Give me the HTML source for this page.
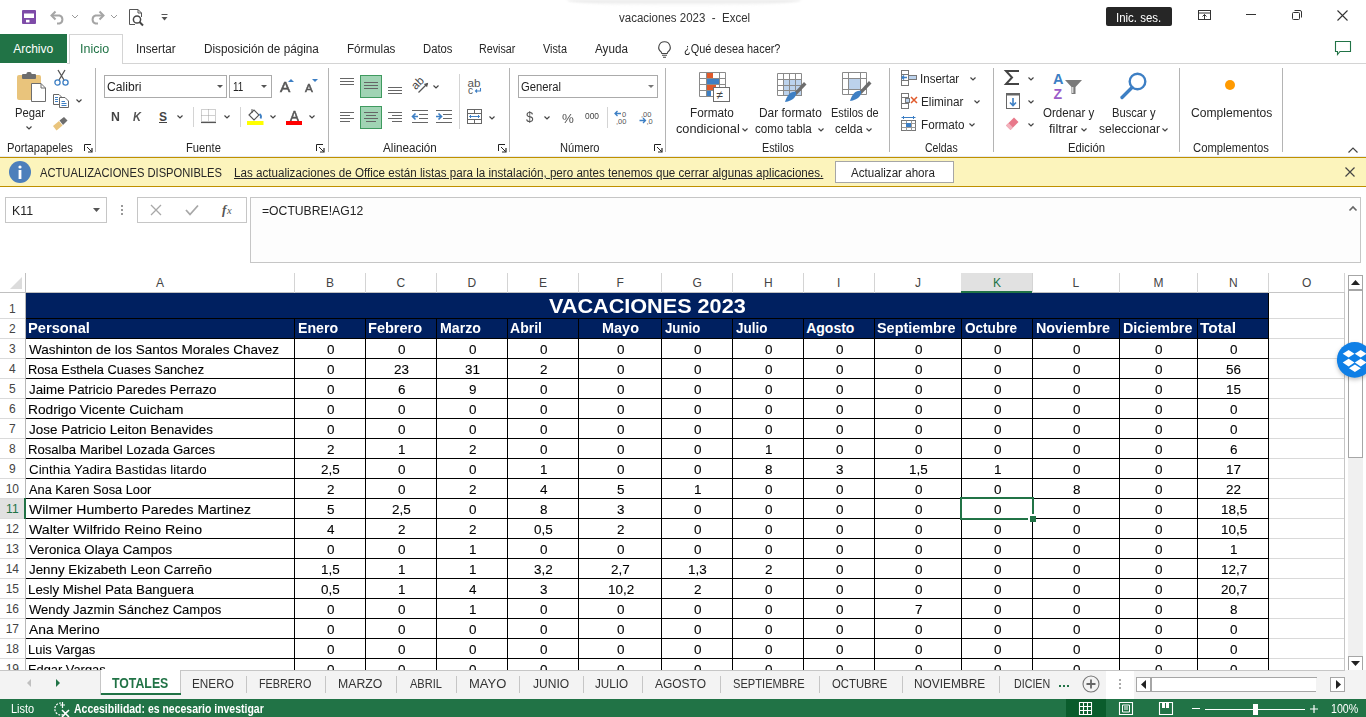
<!DOCTYPE html>
<html><head><meta charset="utf-8"><title>vacaciones 2023 - Excel</title>
<style>
html,body{margin:0;padding:0;}
body{width:1366px;height:717px;overflow:hidden;position:relative;background:#fff;font-family:"Liberation Sans", sans-serif;}
.a{position:absolute;}
.t{position:absolute;white-space:pre;transform-origin:0 0;}
svg.a{overflow:visible;}
</style></head><body>
<div class="a" style="left:0px;top:273px;width:1344px;height:20px;background:#fff;"></div>
<div class="a" style="left:0px;top:292px;width:1344px;height:1px;background:#c0c0c0;"></div>
<div class="a" style="left:294px;top:273px;width:1px;height:20px;background:#d4d4d4;"></div>
<span class="t" style="left:156.00px;top:277px;font-size:12px;line-height:12px;color:#444;">A</span>
<div class="a" style="left:365px;top:273px;width:1px;height:20px;background:#d4d4d4;"></div>
<span class="t" style="left:326.00px;top:277px;font-size:12px;line-height:12px;color:#444;">B</span>
<div class="a" style="left:436px;top:273px;width:1px;height:20px;background:#d4d4d4;"></div>
<span class="t" style="left:396.50px;top:277px;font-size:12px;line-height:12px;color:#444;">C</span>
<div class="a" style="left:507px;top:273px;width:1px;height:20px;background:#d4d4d4;"></div>
<span class="t" style="left:467.50px;top:277px;font-size:12px;line-height:12px;color:#444;">D</span>
<div class="a" style="left:578px;top:273px;width:1px;height:20px;background:#d4d4d4;"></div>
<span class="t" style="left:539.00px;top:277px;font-size:12px;line-height:12px;color:#444;">E</span>
<div class="a" style="left:661px;top:273px;width:1px;height:20px;background:#d4d4d4;"></div>
<span class="t" style="left:616.50px;top:277px;font-size:12px;line-height:12px;color:#444;">F</span>
<div class="a" style="left:732px;top:273px;width:1px;height:20px;background:#d4d4d4;"></div>
<span class="t" style="left:692.50px;top:277px;font-size:12px;line-height:12px;color:#444;">G</span>
<div class="a" style="left:803px;top:273px;width:1px;height:20px;background:#d4d4d4;"></div>
<span class="t" style="left:764.00px;top:277px;font-size:12px;line-height:12px;color:#444;">H</span>
<div class="a" style="left:874px;top:273px;width:1px;height:20px;background:#d4d4d4;"></div>
<span class="t" style="left:837.00px;top:277px;font-size:12px;line-height:12px;color:#444;">I</span>
<div class="a" style="left:961px;top:273px;width:1px;height:20px;background:#d4d4d4;"></div>
<span class="t" style="left:915.00px;top:277px;font-size:12px;line-height:12px;color:#444;">J</span>
<div class="a" style="left:961px;top:273px;width:72px;height:20px;background:#e1e1e1;"></div>
<div class="a" style="left:961px;top:291px;width:72px;height:2px;background:#217346;"></div>
<div class="a" style="left:1032px;top:273px;width:1px;height:20px;background:#d4d4d4;"></div>
<span class="t" style="left:993.00px;top:277px;font-size:12px;line-height:12px;color:#217346;">K</span>
<div class="a" style="left:1119px;top:273px;width:1px;height:20px;background:#d4d4d4;"></div>
<span class="t" style="left:1072.50px;top:277px;font-size:12px;line-height:12px;color:#444;">L</span>
<div class="a" style="left:1197px;top:273px;width:1px;height:20px;background:#d4d4d4;"></div>
<span class="t" style="left:1153.50px;top:277px;font-size:12px;line-height:12px;color:#444;">M</span>
<div class="a" style="left:1268px;top:273px;width:1px;height:20px;background:#d4d4d4;"></div>
<span class="t" style="left:1229.00px;top:277px;font-size:12px;line-height:12px;color:#444;">N</span>
<div class="a" style="left:1344px;top:273px;width:1px;height:20px;background:#d4d4d4;"></div>
<span class="t" style="left:1302.00px;top:277px;font-size:12px;line-height:12px;color:#444;">O</span>
<svg class="a" style="left:10px;top:277px;" width="12" height="12" viewBox="0 0 12 12"><path d="M12 0 L12 12 L0 12 Z" fill="#dcdcdc"/></svg>
<div class="a" style="left:25px;top:273px;width:1px;height:20px;background:#c0c0c0;"></div>
<div class="a" style="left:0px;top:318px;width:25px;height:1px;background:#dadada;"></div>
<span class="t" style="left:9.00px;top:303px;font-size:12px;line-height:12px;color:#444;">1</span>
<div class="a" style="left:0px;top:338px;width:25px;height:1px;background:#dadada;"></div>
<span class="t" style="left:9.00px;top:323px;font-size:12px;line-height:12px;color:#444;">2</span>
<div class="a" style="left:0px;top:358px;width:25px;height:1px;background:#dadada;"></div>
<span class="t" style="left:9.00px;top:343px;font-size:12px;line-height:12px;color:#444;">3</span>
<div class="a" style="left:0px;top:378px;width:25px;height:1px;background:#dadada;"></div>
<span class="t" style="left:9.00px;top:363px;font-size:12px;line-height:12px;color:#444;">4</span>
<div class="a" style="left:0px;top:398px;width:25px;height:1px;background:#dadada;"></div>
<span class="t" style="left:9.00px;top:383px;font-size:12px;line-height:12px;color:#444;">5</span>
<div class="a" style="left:0px;top:418px;width:25px;height:1px;background:#dadada;"></div>
<span class="t" style="left:9.00px;top:403px;font-size:12px;line-height:12px;color:#444;">6</span>
<div class="a" style="left:0px;top:438px;width:25px;height:1px;background:#dadada;"></div>
<span class="t" style="left:9.00px;top:423px;font-size:12px;line-height:12px;color:#444;">7</span>
<div class="a" style="left:0px;top:458px;width:25px;height:1px;background:#dadada;"></div>
<span class="t" style="left:9.00px;top:443px;font-size:12px;line-height:12px;color:#444;">8</span>
<div class="a" style="left:0px;top:478px;width:25px;height:1px;background:#dadada;"></div>
<span class="t" style="left:9.00px;top:463px;font-size:12px;line-height:12px;color:#444;">9</span>
<div class="a" style="left:0px;top:498px;width:25px;height:1px;background:#dadada;"></div>
<span class="t" style="left:5.66px;top:483px;font-size:12px;line-height:12px;color:#444;">10</span>
<div class="a" style="left:0px;top:499px;width:25px;height:20px;background:#e1e1e1;"></div>
<div class="a" style="left:0px;top:518px;width:25px;height:1px;background:#dadada;"></div>
<span class="t" style="left:6.11px;top:503px;font-size:12px;line-height:12px;color:#217346;">11</span>
<div class="a" style="left:0px;top:538px;width:25px;height:1px;background:#dadada;"></div>
<span class="t" style="left:5.66px;top:523px;font-size:12px;line-height:12px;color:#444;">12</span>
<div class="a" style="left:0px;top:558px;width:25px;height:1px;background:#dadada;"></div>
<span class="t" style="left:5.66px;top:543px;font-size:12px;line-height:12px;color:#444;">13</span>
<div class="a" style="left:0px;top:578px;width:25px;height:1px;background:#dadada;"></div>
<span class="t" style="left:5.66px;top:563px;font-size:12px;line-height:12px;color:#444;">14</span>
<div class="a" style="left:0px;top:598px;width:25px;height:1px;background:#dadada;"></div>
<span class="t" style="left:5.66px;top:583px;font-size:12px;line-height:12px;color:#444;">15</span>
<div class="a" style="left:0px;top:618px;width:25px;height:1px;background:#dadada;"></div>
<span class="t" style="left:5.66px;top:603px;font-size:12px;line-height:12px;color:#444;">16</span>
<div class="a" style="left:0px;top:638px;width:25px;height:1px;background:#dadada;"></div>
<span class="t" style="left:5.66px;top:623px;font-size:12px;line-height:12px;color:#444;">17</span>
<div class="a" style="left:0px;top:658px;width:25px;height:1px;background:#dadada;"></div>
<span class="t" style="left:5.66px;top:643px;font-size:12px;line-height:12px;color:#444;">18</span>
<div class="a" style="left:0px;top:678px;width:25px;height:1px;background:#dadada;"></div>
<span class="t" style="left:5.66px;top:663px;font-size:12px;line-height:12px;color:#444;">19</span>
<div class="a" style="left:25px;top:293px;width:1px;height:377px;background:#b8b8b8;"></div>
<div class="a" style="left:26px;top:293px;width:1242px;height:45px;background:#002060;"></div>
<div class="a" style="left:26px;top:318px;width:1242px;height:1px;background:#000;"></div>
<div class="a" style="left:1269px;top:318px;width:75px;height:1px;background:#d9d9d9;"></div>
<div class="a" style="left:1269px;top:338px;width:75px;height:1px;background:#d9d9d9;"></div>
<div class="a" style="left:1269px;top:358px;width:75px;height:1px;background:#d9d9d9;"></div>
<div class="a" style="left:1269px;top:378px;width:75px;height:1px;background:#d9d9d9;"></div>
<div class="a" style="left:1269px;top:398px;width:75px;height:1px;background:#d9d9d9;"></div>
<div class="a" style="left:1269px;top:418px;width:75px;height:1px;background:#d9d9d9;"></div>
<div class="a" style="left:1269px;top:438px;width:75px;height:1px;background:#d9d9d9;"></div>
<div class="a" style="left:1269px;top:458px;width:75px;height:1px;background:#d9d9d9;"></div>
<div class="a" style="left:1269px;top:478px;width:75px;height:1px;background:#d9d9d9;"></div>
<div class="a" style="left:1269px;top:498px;width:75px;height:1px;background:#d9d9d9;"></div>
<div class="a" style="left:1269px;top:518px;width:75px;height:1px;background:#d9d9d9;"></div>
<div class="a" style="left:1269px;top:538px;width:75px;height:1px;background:#d9d9d9;"></div>
<div class="a" style="left:1269px;top:558px;width:75px;height:1px;background:#d9d9d9;"></div>
<div class="a" style="left:1269px;top:578px;width:75px;height:1px;background:#d9d9d9;"></div>
<div class="a" style="left:1269px;top:598px;width:75px;height:1px;background:#d9d9d9;"></div>
<div class="a" style="left:1269px;top:618px;width:75px;height:1px;background:#d9d9d9;"></div>
<div class="a" style="left:1269px;top:638px;width:75px;height:1px;background:#d9d9d9;"></div>
<div class="a" style="left:1269px;top:658px;width:75px;height:1px;background:#d9d9d9;"></div>
<div class="a" style="left:1269px;top:678px;width:75px;height:1px;background:#d9d9d9;"></div>
<div class="a" style="left:1344px;top:293px;width:1px;height:377px;background:#c6c6c6;"></div>
<div class="a" style="left:1269px;top:292px;width:76px;height:1px;background:#c6c6c6;"></div>
<div class="a" style="left:26px;top:338px;width:1243px;height:1px;background:#000;"></div>
<div class="a" style="left:26px;top:358px;width:1243px;height:1px;background:#000;"></div>
<div class="a" style="left:26px;top:378px;width:1243px;height:1px;background:#000;"></div>
<div class="a" style="left:26px;top:398px;width:1243px;height:1px;background:#000;"></div>
<div class="a" style="left:26px;top:418px;width:1243px;height:1px;background:#000;"></div>
<div class="a" style="left:26px;top:438px;width:1243px;height:1px;background:#000;"></div>
<div class="a" style="left:26px;top:458px;width:1243px;height:1px;background:#000;"></div>
<div class="a" style="left:26px;top:478px;width:1243px;height:1px;background:#000;"></div>
<div class="a" style="left:26px;top:498px;width:1243px;height:1px;background:#000;"></div>
<div class="a" style="left:26px;top:518px;width:1243px;height:1px;background:#000;"></div>
<div class="a" style="left:26px;top:538px;width:1243px;height:1px;background:#000;"></div>
<div class="a" style="left:26px;top:558px;width:1243px;height:1px;background:#000;"></div>
<div class="a" style="left:26px;top:578px;width:1243px;height:1px;background:#000;"></div>
<div class="a" style="left:26px;top:598px;width:1243px;height:1px;background:#000;"></div>
<div class="a" style="left:26px;top:618px;width:1243px;height:1px;background:#000;"></div>
<div class="a" style="left:26px;top:638px;width:1243px;height:1px;background:#000;"></div>
<div class="a" style="left:26px;top:658px;width:1243px;height:1px;background:#000;"></div>
<div class="a" style="left:26px;top:678px;width:1243px;height:1px;background:#000;"></div>
<div class="a" style="left:294px;top:318px;width:1px;height:352px;background:#000;"></div>
<div class="a" style="left:365px;top:318px;width:1px;height:352px;background:#000;"></div>
<div class="a" style="left:436px;top:318px;width:1px;height:352px;background:#000;"></div>
<div class="a" style="left:507px;top:318px;width:1px;height:352px;background:#000;"></div>
<div class="a" style="left:578px;top:318px;width:1px;height:352px;background:#000;"></div>
<div class="a" style="left:661px;top:318px;width:1px;height:352px;background:#000;"></div>
<div class="a" style="left:732px;top:318px;width:1px;height:352px;background:#000;"></div>
<div class="a" style="left:803px;top:318px;width:1px;height:352px;background:#000;"></div>
<div class="a" style="left:874px;top:318px;width:1px;height:352px;background:#000;"></div>
<div class="a" style="left:961px;top:318px;width:1px;height:352px;background:#000;"></div>
<div class="a" style="left:1032px;top:318px;width:1px;height:352px;background:#000;"></div>
<div class="a" style="left:1119px;top:318px;width:1px;height:352px;background:#000;"></div>
<div class="a" style="left:1197px;top:318px;width:1px;height:352px;background:#000;"></div>
<div class="a" style="left:1268px;top:318px;width:1px;height:352px;background:#000;"></div>
<div class="a" style="left:1268px;top:293px;width:1px;height:377px;background:#000;"></div>
<span class="t" style="left:549.00px;top:295px;font-size:21px;line-height:21px;color:#fff;font-weight:bold;transform:scaleX(1.0298);">VACACIONES 2023</span>
<span class="t" style="left:28.40px;top:321px;font-size:14px;line-height:14px;color:#fff;font-weight:bold;transform:scaleX(1.0472);">Personal</span>
<span class="t" style="left:297.60px;top:321px;font-size:14px;line-height:14px;color:#fff;font-weight:bold;transform:scaleX(1.0096);">Enero</span>
<span class="t" style="left:368.40px;top:321px;font-size:14px;line-height:14px;color:#fff;font-weight:bold;transform:scaleX(1.0393);">Febrero</span>
<span class="t" style="left:439.60px;top:321px;font-size:14px;line-height:14px;color:#fff;font-weight:bold;transform:scaleX(1.0126);">Marzo</span>
<span class="t" style="left:510.20px;top:321px;font-size:14px;line-height:14px;color:#fff;font-weight:bold;transform:scaleX(1.0032);">Abril</span>
<span class="t" style="left:601.60px;top:321px;font-size:14px;line-height:14px;color:#fff;font-weight:bold;transform:scaleX(1.0331);">Mayo</span>
<span class="t" style="left:665.20px;top:321px;font-size:14px;line-height:14px;color:#fff;font-weight:bold;transform:scaleX(0.9462);">Junio</span>
<span class="t" style="left:735.90px;top:321px;font-size:14px;line-height:14px;color:#fff;font-weight:bold;transform:scaleX(0.9621);">Julio</span>
<span class="t" style="left:806.20px;top:321px;font-size:14px;line-height:14px;color:#fff;font-weight:bold;">Agosto</span>
<span class="t" style="left:877.40px;top:321px;font-size:14px;line-height:14px;color:#fff;font-weight:bold;transform:scaleX(1.0293);">Septiembre</span>
<span class="t" style="left:964.80px;top:321px;font-size:14px;line-height:14px;color:#fff;font-weight:bold;transform:scaleX(0.9686);">Octubre</span>
<span class="t" style="left:1035.70px;top:321px;font-size:14px;line-height:14px;color:#fff;font-weight:bold;transform:scaleX(1.0224);">Noviembre</span>
<span class="t" style="left:1122.60px;top:321px;font-size:14px;line-height:14px;color:#fff;font-weight:bold;transform:scaleX(1.0249);">Diciembre</span>
<span class="t" style="left:1200.30px;top:321px;font-size:14px;line-height:14px;color:#fff;font-weight:bold;transform:scaleX(1.1107);">Total</span>
<span class="t" style="left:28.80px;top:343px;font-size:13px;line-height:13px;color:#000;transform:scaleX(1.0376);-webkit-text-stroke:0.1px #000;">Washinton de los Santos Morales Chavez</span>
<span class="t" style="left:326.97px;top:343px;font-size:13px;line-height:13px;color:#000;transform:scaleX(1.0360);-webkit-text-stroke:0.1px #000;">0</span>
<span class="t" style="left:397.97px;top:343px;font-size:13px;line-height:13px;color:#000;transform:scaleX(1.0360);-webkit-text-stroke:0.1px #000;">0</span>
<span class="t" style="left:468.97px;top:343px;font-size:13px;line-height:13px;color:#000;transform:scaleX(1.0360);-webkit-text-stroke:0.1px #000;">0</span>
<span class="t" style="left:539.97px;top:343px;font-size:13px;line-height:13px;color:#000;transform:scaleX(1.0360);-webkit-text-stroke:0.1px #000;">0</span>
<span class="t" style="left:616.97px;top:343px;font-size:13px;line-height:13px;color:#000;transform:scaleX(1.0360);-webkit-text-stroke:0.1px #000;">0</span>
<span class="t" style="left:693.97px;top:343px;font-size:13px;line-height:13px;color:#000;transform:scaleX(1.0360);-webkit-text-stroke:0.1px #000;">0</span>
<span class="t" style="left:764.97px;top:343px;font-size:13px;line-height:13px;color:#000;transform:scaleX(1.0360);-webkit-text-stroke:0.1px #000;">0</span>
<span class="t" style="left:835.97px;top:343px;font-size:13px;line-height:13px;color:#000;transform:scaleX(1.0360);-webkit-text-stroke:0.1px #000;">0</span>
<span class="t" style="left:914.97px;top:343px;font-size:13px;line-height:13px;color:#000;transform:scaleX(1.0360);-webkit-text-stroke:0.1px #000;">0</span>
<span class="t" style="left:993.97px;top:343px;font-size:13px;line-height:13px;color:#000;transform:scaleX(1.0360);-webkit-text-stroke:0.1px #000;">0</span>
<span class="t" style="left:1072.97px;top:343px;font-size:13px;line-height:13px;color:#000;transform:scaleX(1.0360);-webkit-text-stroke:0.1px #000;">0</span>
<span class="t" style="left:1155.47px;top:343px;font-size:13px;line-height:13px;color:#000;transform:scaleX(1.0360);-webkit-text-stroke:0.1px #000;">0</span>
<span class="t" style="left:1229.97px;top:343px;font-size:13px;line-height:13px;color:#000;transform:scaleX(1.0360);-webkit-text-stroke:0.1px #000;">0</span>
<span class="t" style="left:27.82px;top:363px;font-size:13px;line-height:13px;color:#000;transform:scaleX(0.9825);-webkit-text-stroke:0.1px #000;">Rosa Esthela Cuases Sanchez</span>
<span class="t" style="left:326.97px;top:363px;font-size:13px;line-height:13px;color:#000;transform:scaleX(1.0360);-webkit-text-stroke:0.1px #000;">0</span>
<span class="t" style="left:394.23px;top:363px;font-size:13px;line-height:13px;color:#000;transform:scaleX(1.0360);-webkit-text-stroke:0.1px #000;">23</span>
<span class="t" style="left:465.23px;top:363px;font-size:13px;line-height:13px;color:#000;transform:scaleX(1.0360);-webkit-text-stroke:0.1px #000;">31</span>
<span class="t" style="left:539.97px;top:363px;font-size:13px;line-height:13px;color:#000;transform:scaleX(1.0360);-webkit-text-stroke:0.1px #000;">2</span>
<span class="t" style="left:616.97px;top:363px;font-size:13px;line-height:13px;color:#000;transform:scaleX(1.0360);-webkit-text-stroke:0.1px #000;">0</span>
<span class="t" style="left:693.97px;top:363px;font-size:13px;line-height:13px;color:#000;transform:scaleX(1.0360);-webkit-text-stroke:0.1px #000;">0</span>
<span class="t" style="left:764.97px;top:363px;font-size:13px;line-height:13px;color:#000;transform:scaleX(1.0360);-webkit-text-stroke:0.1px #000;">0</span>
<span class="t" style="left:835.97px;top:363px;font-size:13px;line-height:13px;color:#000;transform:scaleX(1.0360);-webkit-text-stroke:0.1px #000;">0</span>
<span class="t" style="left:914.97px;top:363px;font-size:13px;line-height:13px;color:#000;transform:scaleX(1.0360);-webkit-text-stroke:0.1px #000;">0</span>
<span class="t" style="left:993.97px;top:363px;font-size:13px;line-height:13px;color:#000;transform:scaleX(1.0360);-webkit-text-stroke:0.1px #000;">0</span>
<span class="t" style="left:1072.97px;top:363px;font-size:13px;line-height:13px;color:#000;transform:scaleX(1.0360);-webkit-text-stroke:0.1px #000;">0</span>
<span class="t" style="left:1155.47px;top:363px;font-size:13px;line-height:13px;color:#000;transform:scaleX(1.0360);-webkit-text-stroke:0.1px #000;">0</span>
<span class="t" style="left:1226.23px;top:363px;font-size:13px;line-height:13px;color:#000;transform:scaleX(1.0360);-webkit-text-stroke:0.1px #000;">56</span>
<span class="t" style="left:28.80px;top:383px;font-size:13px;line-height:13px;color:#000;transform:scaleX(1.0259);-webkit-text-stroke:0.1px #000;">Jaime Patricio Paredes Perrazo</span>
<span class="t" style="left:326.97px;top:383px;font-size:13px;line-height:13px;color:#000;transform:scaleX(1.0360);-webkit-text-stroke:0.1px #000;">0</span>
<span class="t" style="left:397.97px;top:383px;font-size:13px;line-height:13px;color:#000;transform:scaleX(1.0360);-webkit-text-stroke:0.1px #000;">6</span>
<span class="t" style="left:468.97px;top:383px;font-size:13px;line-height:13px;color:#000;transform:scaleX(1.0360);-webkit-text-stroke:0.1px #000;">9</span>
<span class="t" style="left:539.97px;top:383px;font-size:13px;line-height:13px;color:#000;transform:scaleX(1.0360);-webkit-text-stroke:0.1px #000;">0</span>
<span class="t" style="left:616.97px;top:383px;font-size:13px;line-height:13px;color:#000;transform:scaleX(1.0360);-webkit-text-stroke:0.1px #000;">0</span>
<span class="t" style="left:693.97px;top:383px;font-size:13px;line-height:13px;color:#000;transform:scaleX(1.0360);-webkit-text-stroke:0.1px #000;">0</span>
<span class="t" style="left:764.97px;top:383px;font-size:13px;line-height:13px;color:#000;transform:scaleX(1.0360);-webkit-text-stroke:0.1px #000;">0</span>
<span class="t" style="left:835.97px;top:383px;font-size:13px;line-height:13px;color:#000;transform:scaleX(1.0360);-webkit-text-stroke:0.1px #000;">0</span>
<span class="t" style="left:914.97px;top:383px;font-size:13px;line-height:13px;color:#000;transform:scaleX(1.0360);-webkit-text-stroke:0.1px #000;">0</span>
<span class="t" style="left:993.97px;top:383px;font-size:13px;line-height:13px;color:#000;transform:scaleX(1.0360);-webkit-text-stroke:0.1px #000;">0</span>
<span class="t" style="left:1072.97px;top:383px;font-size:13px;line-height:13px;color:#000;transform:scaleX(1.0360);-webkit-text-stroke:0.1px #000;">0</span>
<span class="t" style="left:1155.47px;top:383px;font-size:13px;line-height:13px;color:#000;transform:scaleX(1.0360);-webkit-text-stroke:0.1px #000;">0</span>
<span class="t" style="left:1226.23px;top:383px;font-size:13px;line-height:13px;color:#000;transform:scaleX(1.0360);-webkit-text-stroke:0.1px #000;">15</span>
<span class="t" style="left:27.74px;top:403px;font-size:13px;line-height:13px;color:#000;transform:scaleX(1.0554);-webkit-text-stroke:0.1px #000;">Rodrigo Vicente Cuicham</span>
<span class="t" style="left:326.97px;top:403px;font-size:13px;line-height:13px;color:#000;transform:scaleX(1.0360);-webkit-text-stroke:0.1px #000;">0</span>
<span class="t" style="left:397.97px;top:403px;font-size:13px;line-height:13px;color:#000;transform:scaleX(1.0360);-webkit-text-stroke:0.1px #000;">0</span>
<span class="t" style="left:468.97px;top:403px;font-size:13px;line-height:13px;color:#000;transform:scaleX(1.0360);-webkit-text-stroke:0.1px #000;">0</span>
<span class="t" style="left:539.97px;top:403px;font-size:13px;line-height:13px;color:#000;transform:scaleX(1.0360);-webkit-text-stroke:0.1px #000;">0</span>
<span class="t" style="left:616.97px;top:403px;font-size:13px;line-height:13px;color:#000;transform:scaleX(1.0360);-webkit-text-stroke:0.1px #000;">0</span>
<span class="t" style="left:693.97px;top:403px;font-size:13px;line-height:13px;color:#000;transform:scaleX(1.0360);-webkit-text-stroke:0.1px #000;">0</span>
<span class="t" style="left:764.97px;top:403px;font-size:13px;line-height:13px;color:#000;transform:scaleX(1.0360);-webkit-text-stroke:0.1px #000;">0</span>
<span class="t" style="left:835.97px;top:403px;font-size:13px;line-height:13px;color:#000;transform:scaleX(1.0360);-webkit-text-stroke:0.1px #000;">0</span>
<span class="t" style="left:914.97px;top:403px;font-size:13px;line-height:13px;color:#000;transform:scaleX(1.0360);-webkit-text-stroke:0.1px #000;">0</span>
<span class="t" style="left:993.97px;top:403px;font-size:13px;line-height:13px;color:#000;transform:scaleX(1.0360);-webkit-text-stroke:0.1px #000;">0</span>
<span class="t" style="left:1072.97px;top:403px;font-size:13px;line-height:13px;color:#000;transform:scaleX(1.0360);-webkit-text-stroke:0.1px #000;">0</span>
<span class="t" style="left:1155.47px;top:403px;font-size:13px;line-height:13px;color:#000;transform:scaleX(1.0360);-webkit-text-stroke:0.1px #000;">0</span>
<span class="t" style="left:1229.97px;top:403px;font-size:13px;line-height:13px;color:#000;transform:scaleX(1.0360);-webkit-text-stroke:0.1px #000;">0</span>
<span class="t" style="left:28.80px;top:423px;font-size:13px;line-height:13px;color:#000;transform:scaleX(1.0355);-webkit-text-stroke:0.1px #000;">Jose Patricio Leiton Benavides</span>
<span class="t" style="left:326.97px;top:423px;font-size:13px;line-height:13px;color:#000;transform:scaleX(1.0360);-webkit-text-stroke:0.1px #000;">0</span>
<span class="t" style="left:397.97px;top:423px;font-size:13px;line-height:13px;color:#000;transform:scaleX(1.0360);-webkit-text-stroke:0.1px #000;">0</span>
<span class="t" style="left:468.97px;top:423px;font-size:13px;line-height:13px;color:#000;transform:scaleX(1.0360);-webkit-text-stroke:0.1px #000;">0</span>
<span class="t" style="left:539.97px;top:423px;font-size:13px;line-height:13px;color:#000;transform:scaleX(1.0360);-webkit-text-stroke:0.1px #000;">0</span>
<span class="t" style="left:616.97px;top:423px;font-size:13px;line-height:13px;color:#000;transform:scaleX(1.0360);-webkit-text-stroke:0.1px #000;">0</span>
<span class="t" style="left:693.97px;top:423px;font-size:13px;line-height:13px;color:#000;transform:scaleX(1.0360);-webkit-text-stroke:0.1px #000;">0</span>
<span class="t" style="left:764.97px;top:423px;font-size:13px;line-height:13px;color:#000;transform:scaleX(1.0360);-webkit-text-stroke:0.1px #000;">0</span>
<span class="t" style="left:835.97px;top:423px;font-size:13px;line-height:13px;color:#000;transform:scaleX(1.0360);-webkit-text-stroke:0.1px #000;">0</span>
<span class="t" style="left:914.97px;top:423px;font-size:13px;line-height:13px;color:#000;transform:scaleX(1.0360);-webkit-text-stroke:0.1px #000;">0</span>
<span class="t" style="left:993.97px;top:423px;font-size:13px;line-height:13px;color:#000;transform:scaleX(1.0360);-webkit-text-stroke:0.1px #000;">0</span>
<span class="t" style="left:1072.97px;top:423px;font-size:13px;line-height:13px;color:#000;transform:scaleX(1.0360);-webkit-text-stroke:0.1px #000;">0</span>
<span class="t" style="left:1155.47px;top:423px;font-size:13px;line-height:13px;color:#000;transform:scaleX(1.0360);-webkit-text-stroke:0.1px #000;">0</span>
<span class="t" style="left:1229.97px;top:423px;font-size:13px;line-height:13px;color:#000;transform:scaleX(1.0360);-webkit-text-stroke:0.1px #000;">0</span>
<span class="t" style="left:27.79px;top:443px;font-size:13px;line-height:13px;color:#000;transform:scaleX(1.0075);-webkit-text-stroke:0.1px #000;">Rosalba Maribel Lozada Garces</span>
<span class="t" style="left:326.97px;top:443px;font-size:13px;line-height:13px;color:#000;transform:scaleX(1.0360);-webkit-text-stroke:0.1px #000;">2</span>
<span class="t" style="left:397.97px;top:443px;font-size:13px;line-height:13px;color:#000;transform:scaleX(1.0360);-webkit-text-stroke:0.1px #000;">1</span>
<span class="t" style="left:468.97px;top:443px;font-size:13px;line-height:13px;color:#000;transform:scaleX(1.0360);-webkit-text-stroke:0.1px #000;">2</span>
<span class="t" style="left:539.97px;top:443px;font-size:13px;line-height:13px;color:#000;transform:scaleX(1.0360);-webkit-text-stroke:0.1px #000;">0</span>
<span class="t" style="left:616.97px;top:443px;font-size:13px;line-height:13px;color:#000;transform:scaleX(1.0360);-webkit-text-stroke:0.1px #000;">0</span>
<span class="t" style="left:693.97px;top:443px;font-size:13px;line-height:13px;color:#000;transform:scaleX(1.0360);-webkit-text-stroke:0.1px #000;">0</span>
<span class="t" style="left:764.97px;top:443px;font-size:13px;line-height:13px;color:#000;transform:scaleX(1.0360);-webkit-text-stroke:0.1px #000;">1</span>
<span class="t" style="left:835.97px;top:443px;font-size:13px;line-height:13px;color:#000;transform:scaleX(1.0360);-webkit-text-stroke:0.1px #000;">0</span>
<span class="t" style="left:914.97px;top:443px;font-size:13px;line-height:13px;color:#000;transform:scaleX(1.0360);-webkit-text-stroke:0.1px #000;">0</span>
<span class="t" style="left:993.97px;top:443px;font-size:13px;line-height:13px;color:#000;transform:scaleX(1.0360);-webkit-text-stroke:0.1px #000;">0</span>
<span class="t" style="left:1072.97px;top:443px;font-size:13px;line-height:13px;color:#000;transform:scaleX(1.0360);-webkit-text-stroke:0.1px #000;">0</span>
<span class="t" style="left:1155.47px;top:443px;font-size:13px;line-height:13px;color:#000;transform:scaleX(1.0360);-webkit-text-stroke:0.1px #000;">0</span>
<span class="t" style="left:1229.97px;top:443px;font-size:13px;line-height:13px;color:#000;transform:scaleX(1.0360);-webkit-text-stroke:0.1px #000;">6</span>
<span class="t" style="left:28.60px;top:463px;font-size:13px;line-height:13px;color:#000;transform:scaleX(1.0274);">Cinthia Yadira Bastidas litardo</span>
<span class="t" style="left:321.36px;top:463px;font-size:13px;line-height:13px;color:#000;transform:scaleX(1.0360);-webkit-text-stroke:0.1px #000;">2,5</span>
<span class="t" style="left:397.97px;top:463px;font-size:13px;line-height:13px;color:#000;transform:scaleX(1.0360);-webkit-text-stroke:0.1px #000;">0</span>
<span class="t" style="left:468.97px;top:463px;font-size:13px;line-height:13px;color:#000;transform:scaleX(1.0360);-webkit-text-stroke:0.1px #000;">0</span>
<span class="t" style="left:539.97px;top:463px;font-size:13px;line-height:13px;color:#000;transform:scaleX(1.0360);-webkit-text-stroke:0.1px #000;">1</span>
<span class="t" style="left:616.97px;top:463px;font-size:13px;line-height:13px;color:#000;transform:scaleX(1.0360);-webkit-text-stroke:0.1px #000;">0</span>
<span class="t" style="left:693.97px;top:463px;font-size:13px;line-height:13px;color:#000;transform:scaleX(1.0360);-webkit-text-stroke:0.1px #000;">0</span>
<span class="t" style="left:764.97px;top:463px;font-size:13px;line-height:13px;color:#000;transform:scaleX(1.0360);-webkit-text-stroke:0.1px #000;">8</span>
<span class="t" style="left:835.97px;top:463px;font-size:13px;line-height:13px;color:#000;transform:scaleX(1.0360);-webkit-text-stroke:0.1px #000;">3</span>
<span class="t" style="left:909.36px;top:463px;font-size:13px;line-height:13px;color:#000;transform:scaleX(1.0360);-webkit-text-stroke:0.1px #000;">1,5</span>
<span class="t" style="left:993.97px;top:463px;font-size:13px;line-height:13px;color:#000;transform:scaleX(1.0360);-webkit-text-stroke:0.1px #000;">1</span>
<span class="t" style="left:1072.97px;top:463px;font-size:13px;line-height:13px;color:#000;transform:scaleX(1.0360);-webkit-text-stroke:0.1px #000;">0</span>
<span class="t" style="left:1155.47px;top:463px;font-size:13px;line-height:13px;color:#000;transform:scaleX(1.0360);-webkit-text-stroke:0.1px #000;">0</span>
<span class="t" style="left:1226.23px;top:463px;font-size:13px;line-height:13px;color:#000;transform:scaleX(1.0360);-webkit-text-stroke:0.1px #000;">17</span>
<span class="t" style="left:28.80px;top:483px;font-size:13px;line-height:13px;color:#000;transform:scaleX(0.9842);-webkit-text-stroke:0.1px #000;">Ana Karen Sosa Loor</span>
<span class="t" style="left:326.97px;top:483px;font-size:13px;line-height:13px;color:#000;transform:scaleX(1.0360);-webkit-text-stroke:0.1px #000;">2</span>
<span class="t" style="left:397.97px;top:483px;font-size:13px;line-height:13px;color:#000;transform:scaleX(1.0360);-webkit-text-stroke:0.1px #000;">0</span>
<span class="t" style="left:468.97px;top:483px;font-size:13px;line-height:13px;color:#000;transform:scaleX(1.0360);-webkit-text-stroke:0.1px #000;">2</span>
<span class="t" style="left:539.97px;top:483px;font-size:13px;line-height:13px;color:#000;transform:scaleX(1.0360);-webkit-text-stroke:0.1px #000;">4</span>
<span class="t" style="left:616.97px;top:483px;font-size:13px;line-height:13px;color:#000;transform:scaleX(1.0360);-webkit-text-stroke:0.1px #000;">5</span>
<span class="t" style="left:693.97px;top:483px;font-size:13px;line-height:13px;color:#000;transform:scaleX(1.0360);-webkit-text-stroke:0.1px #000;">1</span>
<span class="t" style="left:764.97px;top:483px;font-size:13px;line-height:13px;color:#000;transform:scaleX(1.0360);-webkit-text-stroke:0.1px #000;">0</span>
<span class="t" style="left:835.97px;top:483px;font-size:13px;line-height:13px;color:#000;transform:scaleX(1.0360);-webkit-text-stroke:0.1px #000;">0</span>
<span class="t" style="left:914.97px;top:483px;font-size:13px;line-height:13px;color:#000;transform:scaleX(1.0360);-webkit-text-stroke:0.1px #000;">0</span>
<span class="t" style="left:993.97px;top:483px;font-size:13px;line-height:13px;color:#000;transform:scaleX(1.0360);-webkit-text-stroke:0.1px #000;">0</span>
<span class="t" style="left:1072.97px;top:483px;font-size:13px;line-height:13px;color:#000;transform:scaleX(1.0360);-webkit-text-stroke:0.1px #000;">8</span>
<span class="t" style="left:1155.47px;top:483px;font-size:13px;line-height:13px;color:#000;transform:scaleX(1.0360);-webkit-text-stroke:0.1px #000;">0</span>
<span class="t" style="left:1226.23px;top:483px;font-size:13px;line-height:13px;color:#000;transform:scaleX(1.0360);-webkit-text-stroke:0.1px #000;">22</span>
<span class="t" style="left:28.80px;top:503px;font-size:13px;line-height:13px;color:#000;transform:scaleX(1.0746);-webkit-text-stroke:0.1px #000;">Wilmer Humberto Paredes Martinez</span>
<span class="t" style="left:326.97px;top:503px;font-size:13px;line-height:13px;color:#000;transform:scaleX(1.0360);-webkit-text-stroke:0.1px #000;">5</span>
<span class="t" style="left:392.36px;top:503px;font-size:13px;line-height:13px;color:#000;transform:scaleX(1.0360);-webkit-text-stroke:0.1px #000;">2,5</span>
<span class="t" style="left:468.97px;top:503px;font-size:13px;line-height:13px;color:#000;transform:scaleX(1.0360);-webkit-text-stroke:0.1px #000;">0</span>
<span class="t" style="left:539.97px;top:503px;font-size:13px;line-height:13px;color:#000;transform:scaleX(1.0360);-webkit-text-stroke:0.1px #000;">8</span>
<span class="t" style="left:616.97px;top:503px;font-size:13px;line-height:13px;color:#000;transform:scaleX(1.0360);-webkit-text-stroke:0.1px #000;">3</span>
<span class="t" style="left:693.97px;top:503px;font-size:13px;line-height:13px;color:#000;transform:scaleX(1.0360);-webkit-text-stroke:0.1px #000;">0</span>
<span class="t" style="left:764.97px;top:503px;font-size:13px;line-height:13px;color:#000;transform:scaleX(1.0360);-webkit-text-stroke:0.1px #000;">0</span>
<span class="t" style="left:835.97px;top:503px;font-size:13px;line-height:13px;color:#000;transform:scaleX(1.0360);-webkit-text-stroke:0.1px #000;">0</span>
<span class="t" style="left:914.97px;top:503px;font-size:13px;line-height:13px;color:#000;transform:scaleX(1.0360);-webkit-text-stroke:0.1px #000;">0</span>
<span class="t" style="left:993.97px;top:503px;font-size:13px;line-height:13px;color:#000;transform:scaleX(1.0360);-webkit-text-stroke:0.1px #000;">0</span>
<span class="t" style="left:1072.97px;top:503px;font-size:13px;line-height:13px;color:#000;transform:scaleX(1.0360);-webkit-text-stroke:0.1px #000;">0</span>
<span class="t" style="left:1155.47px;top:503px;font-size:13px;line-height:13px;color:#000;transform:scaleX(1.0360);-webkit-text-stroke:0.1px #000;">0</span>
<span class="t" style="left:1220.61px;top:503px;font-size:13px;line-height:13px;color:#000;transform:scaleX(1.0360);-webkit-text-stroke:0.1px #000;">18,5</span>
<span class="t" style="left:28.80px;top:523px;font-size:13px;line-height:13px;color:#000;transform:scaleX(1.0871);-webkit-text-stroke:0.1px #000;">Walter Wilfrido Reino Reino</span>
<span class="t" style="left:326.97px;top:523px;font-size:13px;line-height:13px;color:#000;transform:scaleX(1.0360);-webkit-text-stroke:0.1px #000;">4</span>
<span class="t" style="left:397.97px;top:523px;font-size:13px;line-height:13px;color:#000;transform:scaleX(1.0360);-webkit-text-stroke:0.1px #000;">2</span>
<span class="t" style="left:468.97px;top:523px;font-size:13px;line-height:13px;color:#000;transform:scaleX(1.0360);-webkit-text-stroke:0.1px #000;">2</span>
<span class="t" style="left:534.36px;top:523px;font-size:13px;line-height:13px;color:#000;transform:scaleX(1.0360);-webkit-text-stroke:0.1px #000;">0,5</span>
<span class="t" style="left:616.97px;top:523px;font-size:13px;line-height:13px;color:#000;transform:scaleX(1.0360);-webkit-text-stroke:0.1px #000;">2</span>
<span class="t" style="left:693.97px;top:523px;font-size:13px;line-height:13px;color:#000;transform:scaleX(1.0360);-webkit-text-stroke:0.1px #000;">0</span>
<span class="t" style="left:764.97px;top:523px;font-size:13px;line-height:13px;color:#000;transform:scaleX(1.0360);-webkit-text-stroke:0.1px #000;">0</span>
<span class="t" style="left:835.97px;top:523px;font-size:13px;line-height:13px;color:#000;transform:scaleX(1.0360);-webkit-text-stroke:0.1px #000;">0</span>
<span class="t" style="left:914.97px;top:523px;font-size:13px;line-height:13px;color:#000;transform:scaleX(1.0360);-webkit-text-stroke:0.1px #000;">0</span>
<span class="t" style="left:993.97px;top:523px;font-size:13px;line-height:13px;color:#000;transform:scaleX(1.0360);-webkit-text-stroke:0.1px #000;">0</span>
<span class="t" style="left:1072.97px;top:523px;font-size:13px;line-height:13px;color:#000;transform:scaleX(1.0360);-webkit-text-stroke:0.1px #000;">0</span>
<span class="t" style="left:1155.47px;top:523px;font-size:13px;line-height:13px;color:#000;transform:scaleX(1.0360);-webkit-text-stroke:0.1px #000;">0</span>
<span class="t" style="left:1220.61px;top:523px;font-size:13px;line-height:13px;color:#000;transform:scaleX(1.0360);-webkit-text-stroke:0.1px #000;">10,5</span>
<span class="t" style="left:28.80px;top:543px;font-size:13px;line-height:13px;color:#000;transform:scaleX(1.0207);-webkit-text-stroke:0.1px #000;">Veronica Olaya Campos</span>
<span class="t" style="left:326.97px;top:543px;font-size:13px;line-height:13px;color:#000;transform:scaleX(1.0360);-webkit-text-stroke:0.1px #000;">0</span>
<span class="t" style="left:397.97px;top:543px;font-size:13px;line-height:13px;color:#000;transform:scaleX(1.0360);-webkit-text-stroke:0.1px #000;">0</span>
<span class="t" style="left:468.97px;top:543px;font-size:13px;line-height:13px;color:#000;transform:scaleX(1.0360);-webkit-text-stroke:0.1px #000;">1</span>
<span class="t" style="left:539.97px;top:543px;font-size:13px;line-height:13px;color:#000;transform:scaleX(1.0360);-webkit-text-stroke:0.1px #000;">0</span>
<span class="t" style="left:616.97px;top:543px;font-size:13px;line-height:13px;color:#000;transform:scaleX(1.0360);-webkit-text-stroke:0.1px #000;">0</span>
<span class="t" style="left:693.97px;top:543px;font-size:13px;line-height:13px;color:#000;transform:scaleX(1.0360);-webkit-text-stroke:0.1px #000;">0</span>
<span class="t" style="left:764.97px;top:543px;font-size:13px;line-height:13px;color:#000;transform:scaleX(1.0360);-webkit-text-stroke:0.1px #000;">0</span>
<span class="t" style="left:835.97px;top:543px;font-size:13px;line-height:13px;color:#000;transform:scaleX(1.0360);-webkit-text-stroke:0.1px #000;">0</span>
<span class="t" style="left:914.97px;top:543px;font-size:13px;line-height:13px;color:#000;transform:scaleX(1.0360);-webkit-text-stroke:0.1px #000;">0</span>
<span class="t" style="left:993.97px;top:543px;font-size:13px;line-height:13px;color:#000;transform:scaleX(1.0360);-webkit-text-stroke:0.1px #000;">0</span>
<span class="t" style="left:1072.97px;top:543px;font-size:13px;line-height:13px;color:#000;transform:scaleX(1.0360);-webkit-text-stroke:0.1px #000;">0</span>
<span class="t" style="left:1155.47px;top:543px;font-size:13px;line-height:13px;color:#000;transform:scaleX(1.0360);-webkit-text-stroke:0.1px #000;">0</span>
<span class="t" style="left:1229.97px;top:543px;font-size:13px;line-height:13px;color:#000;transform:scaleX(1.0360);-webkit-text-stroke:0.1px #000;">1</span>
<span class="t" style="left:28.80px;top:563px;font-size:13px;line-height:13px;color:#000;transform:scaleX(1.0248);-webkit-text-stroke:0.1px #000;">Jenny Ekizabeth Leon Carreño</span>
<span class="t" style="left:321.36px;top:563px;font-size:13px;line-height:13px;color:#000;transform:scaleX(1.0360);-webkit-text-stroke:0.1px #000;">1,5</span>
<span class="t" style="left:397.97px;top:563px;font-size:13px;line-height:13px;color:#000;transform:scaleX(1.0360);-webkit-text-stroke:0.1px #000;">1</span>
<span class="t" style="left:468.97px;top:563px;font-size:13px;line-height:13px;color:#000;transform:scaleX(1.0360);-webkit-text-stroke:0.1px #000;">1</span>
<span class="t" style="left:534.36px;top:563px;font-size:13px;line-height:13px;color:#000;transform:scaleX(1.0360);-webkit-text-stroke:0.1px #000;">3,2</span>
<span class="t" style="left:611.36px;top:563px;font-size:13px;line-height:13px;color:#000;transform:scaleX(1.0360);-webkit-text-stroke:0.1px #000;">2,7</span>
<span class="t" style="left:688.36px;top:563px;font-size:13px;line-height:13px;color:#000;transform:scaleX(1.0360);-webkit-text-stroke:0.1px #000;">1,3</span>
<span class="t" style="left:764.97px;top:563px;font-size:13px;line-height:13px;color:#000;transform:scaleX(1.0360);-webkit-text-stroke:0.1px #000;">2</span>
<span class="t" style="left:835.97px;top:563px;font-size:13px;line-height:13px;color:#000;transform:scaleX(1.0360);-webkit-text-stroke:0.1px #000;">0</span>
<span class="t" style="left:914.97px;top:563px;font-size:13px;line-height:13px;color:#000;transform:scaleX(1.0360);-webkit-text-stroke:0.1px #000;">0</span>
<span class="t" style="left:993.97px;top:563px;font-size:13px;line-height:13px;color:#000;transform:scaleX(1.0360);-webkit-text-stroke:0.1px #000;">0</span>
<span class="t" style="left:1072.97px;top:563px;font-size:13px;line-height:13px;color:#000;transform:scaleX(1.0360);-webkit-text-stroke:0.1px #000;">0</span>
<span class="t" style="left:1155.47px;top:563px;font-size:13px;line-height:13px;color:#000;transform:scaleX(1.0360);-webkit-text-stroke:0.1px #000;">0</span>
<span class="t" style="left:1220.61px;top:563px;font-size:13px;line-height:13px;color:#000;transform:scaleX(1.0360);-webkit-text-stroke:0.1px #000;">12,7</span>
<span class="t" style="left:27.78px;top:583px;font-size:13px;line-height:13px;color:#000;transform:scaleX(1.0245);-webkit-text-stroke:0.1px #000;">Lesly Mishel Pata Banguera</span>
<span class="t" style="left:321.36px;top:583px;font-size:13px;line-height:13px;color:#000;transform:scaleX(1.0360);-webkit-text-stroke:0.1px #000;">0,5</span>
<span class="t" style="left:397.97px;top:583px;font-size:13px;line-height:13px;color:#000;transform:scaleX(1.0360);-webkit-text-stroke:0.1px #000;">1</span>
<span class="t" style="left:468.97px;top:583px;font-size:13px;line-height:13px;color:#000;transform:scaleX(1.0360);-webkit-text-stroke:0.1px #000;">4</span>
<span class="t" style="left:539.97px;top:583px;font-size:13px;line-height:13px;color:#000;transform:scaleX(1.0360);-webkit-text-stroke:0.1px #000;">3</span>
<span class="t" style="left:607.61px;top:583px;font-size:13px;line-height:13px;color:#000;transform:scaleX(1.0360);-webkit-text-stroke:0.1px #000;">10,2</span>
<span class="t" style="left:693.97px;top:583px;font-size:13px;line-height:13px;color:#000;transform:scaleX(1.0360);-webkit-text-stroke:0.1px #000;">2</span>
<span class="t" style="left:764.97px;top:583px;font-size:13px;line-height:13px;color:#000;transform:scaleX(1.0360);-webkit-text-stroke:0.1px #000;">0</span>
<span class="t" style="left:835.97px;top:583px;font-size:13px;line-height:13px;color:#000;transform:scaleX(1.0360);-webkit-text-stroke:0.1px #000;">0</span>
<span class="t" style="left:914.97px;top:583px;font-size:13px;line-height:13px;color:#000;transform:scaleX(1.0360);-webkit-text-stroke:0.1px #000;">0</span>
<span class="t" style="left:993.97px;top:583px;font-size:13px;line-height:13px;color:#000;transform:scaleX(1.0360);-webkit-text-stroke:0.1px #000;">0</span>
<span class="t" style="left:1072.97px;top:583px;font-size:13px;line-height:13px;color:#000;transform:scaleX(1.0360);-webkit-text-stroke:0.1px #000;">0</span>
<span class="t" style="left:1155.47px;top:583px;font-size:13px;line-height:13px;color:#000;transform:scaleX(1.0360);-webkit-text-stroke:0.1px #000;">0</span>
<span class="t" style="left:1220.61px;top:583px;font-size:13px;line-height:13px;color:#000;transform:scaleX(1.0360);-webkit-text-stroke:0.1px #000;">20,7</span>
<span class="t" style="left:28.80px;top:603px;font-size:13px;line-height:13px;color:#000;transform:scaleX(1.0056);-webkit-text-stroke:0.1px #000;">Wendy Jazmin Sánchez Campos</span>
<span class="t" style="left:326.97px;top:603px;font-size:13px;line-height:13px;color:#000;transform:scaleX(1.0360);-webkit-text-stroke:0.1px #000;">0</span>
<span class="t" style="left:397.97px;top:603px;font-size:13px;line-height:13px;color:#000;transform:scaleX(1.0360);-webkit-text-stroke:0.1px #000;">0</span>
<span class="t" style="left:468.97px;top:603px;font-size:13px;line-height:13px;color:#000;transform:scaleX(1.0360);-webkit-text-stroke:0.1px #000;">1</span>
<span class="t" style="left:539.97px;top:603px;font-size:13px;line-height:13px;color:#000;transform:scaleX(1.0360);-webkit-text-stroke:0.1px #000;">0</span>
<span class="t" style="left:616.97px;top:603px;font-size:13px;line-height:13px;color:#000;transform:scaleX(1.0360);-webkit-text-stroke:0.1px #000;">0</span>
<span class="t" style="left:693.97px;top:603px;font-size:13px;line-height:13px;color:#000;transform:scaleX(1.0360);-webkit-text-stroke:0.1px #000;">0</span>
<span class="t" style="left:764.97px;top:603px;font-size:13px;line-height:13px;color:#000;transform:scaleX(1.0360);-webkit-text-stroke:0.1px #000;">0</span>
<span class="t" style="left:835.97px;top:603px;font-size:13px;line-height:13px;color:#000;transform:scaleX(1.0360);-webkit-text-stroke:0.1px #000;">0</span>
<span class="t" style="left:914.97px;top:603px;font-size:13px;line-height:13px;color:#000;transform:scaleX(1.0360);-webkit-text-stroke:0.1px #000;">7</span>
<span class="t" style="left:993.97px;top:603px;font-size:13px;line-height:13px;color:#000;transform:scaleX(1.0360);-webkit-text-stroke:0.1px #000;">0</span>
<span class="t" style="left:1072.97px;top:603px;font-size:13px;line-height:13px;color:#000;transform:scaleX(1.0360);-webkit-text-stroke:0.1px #000;">0</span>
<span class="t" style="left:1155.47px;top:603px;font-size:13px;line-height:13px;color:#000;transform:scaleX(1.0360);-webkit-text-stroke:0.1px #000;">0</span>
<span class="t" style="left:1229.97px;top:603px;font-size:13px;line-height:13px;color:#000;transform:scaleX(1.0360);-webkit-text-stroke:0.1px #000;">8</span>
<span class="t" style="left:28.80px;top:623px;font-size:13px;line-height:13px;color:#000;transform:scaleX(1.0627);-webkit-text-stroke:0.1px #000;">Ana Merino</span>
<span class="t" style="left:326.97px;top:623px;font-size:13px;line-height:13px;color:#000;transform:scaleX(1.0360);-webkit-text-stroke:0.1px #000;">0</span>
<span class="t" style="left:397.97px;top:623px;font-size:13px;line-height:13px;color:#000;transform:scaleX(1.0360);-webkit-text-stroke:0.1px #000;">0</span>
<span class="t" style="left:468.97px;top:623px;font-size:13px;line-height:13px;color:#000;transform:scaleX(1.0360);-webkit-text-stroke:0.1px #000;">0</span>
<span class="t" style="left:539.97px;top:623px;font-size:13px;line-height:13px;color:#000;transform:scaleX(1.0360);-webkit-text-stroke:0.1px #000;">0</span>
<span class="t" style="left:616.97px;top:623px;font-size:13px;line-height:13px;color:#000;transform:scaleX(1.0360);-webkit-text-stroke:0.1px #000;">0</span>
<span class="t" style="left:693.97px;top:623px;font-size:13px;line-height:13px;color:#000;transform:scaleX(1.0360);-webkit-text-stroke:0.1px #000;">0</span>
<span class="t" style="left:764.97px;top:623px;font-size:13px;line-height:13px;color:#000;transform:scaleX(1.0360);-webkit-text-stroke:0.1px #000;">0</span>
<span class="t" style="left:835.97px;top:623px;font-size:13px;line-height:13px;color:#000;transform:scaleX(1.0360);-webkit-text-stroke:0.1px #000;">0</span>
<span class="t" style="left:914.97px;top:623px;font-size:13px;line-height:13px;color:#000;transform:scaleX(1.0360);-webkit-text-stroke:0.1px #000;">0</span>
<span class="t" style="left:993.97px;top:623px;font-size:13px;line-height:13px;color:#000;transform:scaleX(1.0360);-webkit-text-stroke:0.1px #000;">0</span>
<span class="t" style="left:1072.97px;top:623px;font-size:13px;line-height:13px;color:#000;transform:scaleX(1.0360);-webkit-text-stroke:0.1px #000;">0</span>
<span class="t" style="left:1155.47px;top:623px;font-size:13px;line-height:13px;color:#000;transform:scaleX(1.0360);-webkit-text-stroke:0.1px #000;">0</span>
<span class="t" style="left:1229.97px;top:623px;font-size:13px;line-height:13px;color:#000;transform:scaleX(1.0360);-webkit-text-stroke:0.1px #000;">0</span>
<span class="t" style="left:27.81px;top:643px;font-size:13px;line-height:13px;color:#000;transform:scaleX(0.9943);-webkit-text-stroke:0.1px #000;">Luis Vargas</span>
<span class="t" style="left:326.97px;top:643px;font-size:13px;line-height:13px;color:#000;transform:scaleX(1.0360);-webkit-text-stroke:0.1px #000;">0</span>
<span class="t" style="left:397.97px;top:643px;font-size:13px;line-height:13px;color:#000;transform:scaleX(1.0360);-webkit-text-stroke:0.1px #000;">0</span>
<span class="t" style="left:468.97px;top:643px;font-size:13px;line-height:13px;color:#000;transform:scaleX(1.0360);-webkit-text-stroke:0.1px #000;">0</span>
<span class="t" style="left:539.97px;top:643px;font-size:13px;line-height:13px;color:#000;transform:scaleX(1.0360);-webkit-text-stroke:0.1px #000;">0</span>
<span class="t" style="left:616.97px;top:643px;font-size:13px;line-height:13px;color:#000;transform:scaleX(1.0360);-webkit-text-stroke:0.1px #000;">0</span>
<span class="t" style="left:693.97px;top:643px;font-size:13px;line-height:13px;color:#000;transform:scaleX(1.0360);-webkit-text-stroke:0.1px #000;">0</span>
<span class="t" style="left:764.97px;top:643px;font-size:13px;line-height:13px;color:#000;transform:scaleX(1.0360);-webkit-text-stroke:0.1px #000;">0</span>
<span class="t" style="left:835.97px;top:643px;font-size:13px;line-height:13px;color:#000;transform:scaleX(1.0360);-webkit-text-stroke:0.1px #000;">0</span>
<span class="t" style="left:914.97px;top:643px;font-size:13px;line-height:13px;color:#000;transform:scaleX(1.0360);-webkit-text-stroke:0.1px #000;">0</span>
<span class="t" style="left:993.97px;top:643px;font-size:13px;line-height:13px;color:#000;transform:scaleX(1.0360);-webkit-text-stroke:0.1px #000;">0</span>
<span class="t" style="left:1072.97px;top:643px;font-size:13px;line-height:13px;color:#000;transform:scaleX(1.0360);-webkit-text-stroke:0.1px #000;">0</span>
<span class="t" style="left:1155.47px;top:643px;font-size:13px;line-height:13px;color:#000;transform:scaleX(1.0360);-webkit-text-stroke:0.1px #000;">0</span>
<span class="t" style="left:1229.97px;top:643px;font-size:13px;line-height:13px;color:#000;transform:scaleX(1.0360);-webkit-text-stroke:0.1px #000;">0</span>
<span class="t" style="left:27.81px;top:663px;font-size:13px;line-height:13px;color:#000;transform:scaleX(0.9881);-webkit-text-stroke:0.1px #000;">Edgar Vargas</span>
<span class="t" style="left:326.97px;top:663px;font-size:13px;line-height:13px;color:#000;transform:scaleX(1.0360);-webkit-text-stroke:0.1px #000;">0</span>
<span class="t" style="left:397.97px;top:663px;font-size:13px;line-height:13px;color:#000;transform:scaleX(1.0360);-webkit-text-stroke:0.1px #000;">0</span>
<span class="t" style="left:468.97px;top:663px;font-size:13px;line-height:13px;color:#000;transform:scaleX(1.0360);-webkit-text-stroke:0.1px #000;">0</span>
<span class="t" style="left:539.97px;top:663px;font-size:13px;line-height:13px;color:#000;transform:scaleX(1.0360);-webkit-text-stroke:0.1px #000;">0</span>
<span class="t" style="left:616.97px;top:663px;font-size:13px;line-height:13px;color:#000;transform:scaleX(1.0360);-webkit-text-stroke:0.1px #000;">0</span>
<span class="t" style="left:693.97px;top:663px;font-size:13px;line-height:13px;color:#000;transform:scaleX(1.0360);-webkit-text-stroke:0.1px #000;">0</span>
<span class="t" style="left:764.97px;top:663px;font-size:13px;line-height:13px;color:#000;transform:scaleX(1.0360);-webkit-text-stroke:0.1px #000;">0</span>
<span class="t" style="left:835.97px;top:663px;font-size:13px;line-height:13px;color:#000;transform:scaleX(1.0360);-webkit-text-stroke:0.1px #000;">0</span>
<span class="t" style="left:914.97px;top:663px;font-size:13px;line-height:13px;color:#000;transform:scaleX(1.0360);-webkit-text-stroke:0.1px #000;">0</span>
<span class="t" style="left:993.97px;top:663px;font-size:13px;line-height:13px;color:#000;transform:scaleX(1.0360);-webkit-text-stroke:0.1px #000;">0</span>
<span class="t" style="left:1072.97px;top:663px;font-size:13px;line-height:13px;color:#000;transform:scaleX(1.0360);-webkit-text-stroke:0.1px #000;">0</span>
<span class="t" style="left:1155.47px;top:663px;font-size:13px;line-height:13px;color:#000;transform:scaleX(1.0360);-webkit-text-stroke:0.1px #000;">0</span>
<span class="t" style="left:1229.97px;top:663px;font-size:13px;line-height:13px;color:#000;transform:scaleX(1.0360);-webkit-text-stroke:0.1px #000;">0</span>
<div class="a" style="left:960px;top:497px;width:74px;height:23px;border:2px solid #217346;box-sizing:border-box;"></div>
<div class="a" style="left:1028px;top:514px;width:8px;height:8px;background:#fff;"></div>
<div class="a" style="left:1030px;top:516px;width:6px;height:6px;background:#217346;"></div>
<div class="a" style="left:24px;top:498px;width:2px;height:21px;background:#217346;"></div>
<div class="a" style="left:1345px;top:273px;width:21px;height:398px;background:#fff;"></div>
<div class="a" style="left:1348px;top:457px;width:15px;height:199px;background:#f0f0f0;"></div>
<div class="a" style="left:1348px;top:275px;width:15px;height:15px;background:#fff;border:1px solid #a6a6a6;box-sizing:border-box;"></div>
<svg class="a" style="left:1351px;top:280px;" width="9" height="5" viewBox="0 0 9 5"><path d="M0 5 L4.5 0 L9 5 Z" fill="#222"/></svg>
<div class="a" style="left:1348px;top:290px;width:15px;height:168px;background:#fff;border:1px solid #a6a6a6;box-sizing:border-box;"></div>
<div class="a" style="left:1348px;top:656px;width:15px;height:15px;background:#fff;border:1px solid #a6a6a6;box-sizing:border-box;"></div>
<svg class="a" style="left:1351px;top:661px;" width="9" height="5" viewBox="0 0 9 5"><path d="M0 0 L4.5 5 L9 0 Z" fill="#222"/></svg>
<svg class="a" style="left:22px;top:10px;" width="14" height="14" viewBox="0 0 14 14"><rect x="0" y="0" width="14" height="14" rx="1" fill="#7e4ba8"/><rect x="2" y="3.5" width="10" height="4.5" fill="#fff"/><rect x="4" y="9.8" width="3.5" height="2.6" fill="#fff"/></svg>
<svg class="a" style="left:50px;top:10px;" width="16" height="14" viewBox="0 0 16 14"><path d="M2 5.5 H9.5 A4.2 4.2 0 0 1 9.5 13.5 H7" fill="none" stroke="#a5a5a5" stroke-width="2"/><path d="M5.5 1.5 L1.5 5.5 L5.5 9.5" fill="none" stroke="#a5a5a5" stroke-width="2"/></svg>
<svg class="a" style="left:72px;top:15px;" width="6" height="3" viewBox="0 0 6 3"><path d="M0 0 L3 3 L6 0" fill="none" stroke="#9a9a9a" stroke-width="1"/></svg>
<svg class="a" style="left:89px;top:10px;" width="16" height="14" viewBox="0 0 16 14"><path d="M14 5.5 H6.5 A4.2 4.2 0 0 0 6.5 13.5 H9" fill="none" stroke="#a5a5a5" stroke-width="2"/><path d="M10.5 1.5 L14.5 5.5 L10.5 9.5" fill="none" stroke="#a5a5a5" stroke-width="2"/></svg>
<svg class="a" style="left:111px;top:15px;" width="6" height="3" viewBox="0 0 6 3"><path d="M0 0 L3 3 L6 0" fill="none" stroke="#9a9a9a" stroke-width="1"/></svg>
<svg class="a" style="left:129px;top:9px;" width="16" height="17" viewBox="0 0 16 17"><path d="M0.5 0.5 H9 L12.5 4 V8 M6 15.5 H0.5 V0.5" fill="none" stroke="#555" stroke-width="1"/><path d="M9 0.5 V4 H12.5" fill="none" stroke="#555" stroke-width="1"/><circle cx="8" cy="10.5" r="3.6" fill="none" stroke="#444" stroke-width="1.5"/><path d="M10.5 13 L14 16.5" stroke="#444" stroke-width="2"/></svg>
<svg class="a" style="left:161px;top:14px;" width="7" height="7" viewBox="0 0 7 7"><rect x="0.5" y="0" width="6" height="1" fill="#555"/><path d="M0.5 3 H6.5 L3.5 6.5 Z" fill="#555"/></svg>
<span class="t" style="left:619.00px;top:12px;font-size:12px;line-height:12px;color:#333;transform:scaleX(0.9590);">vacaciones 2023  -  Excel</span>
<div class="a" style="left:567px;top:0px;width:234px;height:6px;background:linear-gradient(#e6e6e6,rgba(255,255,255,0));border-radius:0 0 50% 50%/0 0 100% 100%;filter:blur(1px);"></div>
<div class="a" style="left:1106px;top:7px;width:66px;height:19px;background:#262626;border-radius:2px;"></div>
<span class="t" style="left:1116.04px;top:12px;font-size:12px;line-height:12px;color:#fff;transform:scaleX(0.9562);">Inic. ses.</span>
<svg class="a" style="left:1198px;top:10px;" width="13" height="10" viewBox="0 0 13 10"><rect x="0.5" y="0.5" width="12" height="9" fill="none" stroke="#333"/><path d="M0.5 3 H12.5" stroke="#333"/><path d="M6.5 9 V4.5 M4.5 6.5 L6.5 4.5 L8.5 6.5" fill="none" stroke="#333"/></svg>
<svg class="a" style="left:1246px;top:14px;" width="10" height="1" viewBox="0 0 10 1"><rect width="10" height="1" fill="#333"/></svg>
<svg class="a" style="left:1292px;top:10px;" width="10" height="10" viewBox="0 0 10 10"><rect x="0.5" y="2.5" width="7" height="7" rx="1" fill="none" stroke="#333"/><path d="M2.5 0.5 H8 A1.5 1.5 0 0 1 9.5 2 V7.5" fill="none" stroke="#333"/></svg>
<svg class="a" style="left:1337px;top:10px;" width="11" height="11" viewBox="0 0 11 11"><path d="M0.5 0.5 L10.5 10.5 M10.5 0.5 L0.5 10.5" stroke="#333" stroke-width="1.1"/></svg>
<div class="a" style="left:0px;top:34px;width:67px;height:29px;background:#217346;"></div>
<span class="t" style="left:13.20px;top:43px;font-size:12px;line-height:12px;color:#fff;">Archivo</span>
<div class="a" style="left:69px;top:34px;width:54px;height:30px;background:#fff;border:1px solid #d4d4d4;box-sizing:border-box;border-bottom:none;"></div>
<span class="t" style="left:80.36px;top:43px;font-size:12px;line-height:12px;color:#217346;transform:scaleX(1.0424);">Inicio</span>
<div class="a" style="left:67px;top:63px;width:2px;height:1px;background:#d4d4d4;"></div>
<div class="a" style="left:122px;top:63px;width:1244px;height:1px;background:#d4d4d4;"></div>
<span class="t" style="left:136.43px;top:43px;font-size:12px;line-height:12px;color:#262626;transform:scaleX(0.9726);">Insertar</span>
<span class="t" style="left:203.60px;top:43px;font-size:12px;line-height:12px;color:#262626;transform:scaleX(0.9785);">Disposición de página</span>
<span class="t" style="left:346.60px;top:43px;font-size:12px;line-height:12px;color:#262626;transform:scaleX(0.9678);">Fórmulas</span>
<span class="t" style="left:422.60px;top:43px;font-size:12px;line-height:12px;color:#262626;transform:scaleX(0.9379);">Datos</span>
<span class="t" style="left:479.40px;top:43px;font-size:12px;line-height:12px;color:#262626;transform:scaleX(0.8923);">Revisar</span>
<span class="t" style="left:543.00px;top:43px;font-size:12px;line-height:12px;color:#262626;transform:scaleX(0.9034);">Vista</span>
<span class="t" style="left:595.30px;top:43px;font-size:12px;line-height:12px;color:#262626;transform:scaleX(0.9726);">Ayuda</span>
<span class="t" style="left:684.30px;top:43px;font-size:12px;line-height:12px;color:#262626;transform:scaleX(0.9089);">¿Qué desea hacer?</span>
<svg class="a" style="left:658px;top:41px;" width="13" height="17" viewBox="0 0 13 17"><path d="M6.5 0.8 A5.6 5.6 0 0 0 3.2 11 L3.8 12.5 H9.2 L9.8 11 A5.6 5.6 0 0 0 6.5 0.8 Z" fill="none" stroke="#444" stroke-width="1.1"/><path d="M4 14.3 H9 M5 16.2 H8" stroke="#444" stroke-width="1.1"/></svg>
<svg class="a" style="left:1335px;top:41px;" width="16" height="14" viewBox="0 0 16 14"><path d="M0.5 0.5 H15.5 V10.5 H5 L2.5 13.5 V10.5 H0.5 Z" fill="none" stroke="#217346" stroke-width="1.1"/></svg>
<div class="a" style="left:95px;top:68px;width:1px;height:84px;background:#b4b4b4;"></div>
<div class="a" style="left:328px;top:68px;width:1px;height:84px;background:#b4b4b4;"></div>
<div class="a" style="left:509px;top:68px;width:1px;height:84px;background:#b4b4b4;"></div>
<div class="a" style="left:665px;top:68px;width:1px;height:84px;background:#b4b4b4;"></div>
<div class="a" style="left:889px;top:68px;width:1px;height:84px;background:#b4b4b4;"></div>
<div class="a" style="left:993px;top:68px;width:1px;height:84px;background:#b4b4b4;"></div>
<div class="a" style="left:1179px;top:68px;width:1px;height:84px;background:#b4b4b4;"></div>
<div class="a" style="left:1282px;top:68px;width:1px;height:84px;background:#b4b4b4;"></div>
<span class="t" style="left:6.70px;top:141.6px;font-size:12px;line-height:12px;color:#262626;transform:scaleX(0.9305);">Portapapeles</span>
<span class="t" style="left:185.50px;top:141.6px;font-size:12px;line-height:12px;color:#262626;transform:scaleX(0.9340);">Fuente</span>
<span class="t" style="left:383.30px;top:141.6px;font-size:12px;line-height:12px;color:#262626;transform:scaleX(0.9726);">Alineación</span>
<span class="t" style="left:559.60px;top:141.6px;font-size:12px;line-height:12px;color:#262626;transform:scaleX(0.9255);">Número</span>
<span class="t" style="left:761.50px;top:141.6px;font-size:12px;line-height:12px;color:#262626;transform:scaleX(0.8997);">Estilos</span>
<span class="t" style="left:924.60px;top:141.6px;font-size:12px;line-height:12px;color:#262626;transform:scaleX(0.8754);">Celdas</span>
<span class="t" style="left:1067.80px;top:141.6px;font-size:12px;line-height:12px;color:#262626;transform:scaleX(0.9436);">Edición</span>
<span class="t" style="left:1192.70px;top:141.6px;font-size:12px;line-height:12px;color:#262626;transform:scaleX(0.9393);">Complementos</span>
<svg class="a" style="left:83px;top:143px;" width="10" height="10" viewBox="0 0 10 10"><path d="M1.5 8 V1.5 H8" fill="none" stroke="#222" stroke-width="1"/><path d="M4 4 L8.5 8.5" stroke="#222" stroke-width="1"/><path d="M9 5 V9 H5" fill="none" stroke="#222" stroke-width="1.2"/></svg>
<svg class="a" style="left:315px;top:143px;" width="10" height="10" viewBox="0 0 10 10"><path d="M1.5 8 V1.5 H8" fill="none" stroke="#222" stroke-width="1"/><path d="M4 4 L8.5 8.5" stroke="#222" stroke-width="1"/><path d="M9 5 V9 H5" fill="none" stroke="#222" stroke-width="1.2"/></svg>
<svg class="a" style="left:497px;top:143px;" width="10" height="10" viewBox="0 0 10 10"><path d="M1.5 8 V1.5 H8" fill="none" stroke="#222" stroke-width="1"/><path d="M4 4 L8.5 8.5" stroke="#222" stroke-width="1"/><path d="M9 5 V9 H5" fill="none" stroke="#222" stroke-width="1.2"/></svg>
<svg class="a" style="left:653px;top:143px;" width="10" height="10" viewBox="0 0 10 10"><path d="M1.5 8 V1.5 H8" fill="none" stroke="#222" stroke-width="1"/><path d="M4 4 L8.5 8.5" stroke="#222" stroke-width="1"/><path d="M9 5 V9 H5" fill="none" stroke="#222" stroke-width="1.2"/></svg>
<div class="a" style="left:0px;top:156px;width:1366px;height:1px;background:#e6e9ef;"></div>
<svg class="a" style="left:1348px;top:147px;" width="10" height="6" viewBox="0 0 10 6"><path d="M0.5 5.5 L5 1 L9.5 5.5" fill="none" stroke="#444" stroke-width="1.2"/></svg>
<svg class="a" style="left:17px;top:72px;" width="29" height="30" viewBox="0 0 29 30"><rect x="0" y="3" width="24" height="25" rx="2" fill="#e9c47c"/><rect x="5" y="2" width="14" height="5" rx="1" fill="#6d6d6d"/><rect x="9.5" y="0" width="5" height="4" rx="1.5" fill="#6d6d6d"/><path d="M14.5 11.5 H24 L28.5 16 V29.5 H14.5 Z" fill="#fff" stroke="#6d6d6d" stroke-width="1"/><path d="M24 11.5 V16 H28.5" fill="none" stroke="#6d6d6d" stroke-width="1"/></svg>
<span class="t" style="left:14.50px;top:107px;font-size:12px;line-height:12px;color:#262626;transform:scaleX(0.9368);">Pegar</span>
<svg class="a" style="left:26px;top:126px;" width="6" height="4" viewBox="0 0 6 4"><path d="M0.5 0.5 L3 3 L5.5 0.5" fill="none" stroke="#444" stroke-width="1.2"/></svg>
<svg class="a" style="left:54px;top:70px;" width="15" height="16" viewBox="0 0 15 16"><path d="M4 0 L10 10 M11 0 L5 10" stroke="#555" stroke-width="1.3"/><circle cx="3.5" cy="12.5" r="2.6" fill="none" stroke="#3d7fc4" stroke-width="1.3"/><circle cx="11.5" cy="12.5" r="2.6" fill="none" stroke="#3d7fc4" stroke-width="1.3"/></svg>
<svg class="a" style="left:53px;top:94px;" width="16" height="14" viewBox="0 0 16 14"><path d="M0.5 0.5 H6 L8.5 3 V10.5 H0.5 Z" fill="#fff" stroke="#666"/><path d="M6.5 3.5 H12 L15.5 7 V13.5 H6.5 Z" fill="#fff" stroke="#666"/><path d="M2 3.5 H5 M2 5.5 H5 M2 7.5 H5 M8.5 7.5 H12 M8.5 9.5 H13.5 M8.5 11.5 H13.5" stroke="#3d7fc4" stroke-width="1"/></svg>
<svg class="a" style="left:76px;top:99px;" width="6" height="4" viewBox="0 0 6 4"><path d="M0.5 0.5 L3 3 L5.5 0.5" fill="none" stroke="#444" stroke-width="1.2"/></svg>
<svg class="a" style="left:53px;top:117px;" width="16" height="14" viewBox="0 0 16 14"><path d="M0 9 L6 4 L9.5 8.5 L3.5 13.5 Z" fill="#e9c47c"/><path d="M6.5 3.5 L11 0 L14.5 3.5 L10 8 Z" fill="#6d6d6d"/></svg>
<div class="a" style="left:104px;top:75px;width:123px;height:23px;background:#fff;border:1px solid #ababab;box-sizing:border-box;"></div>
<span class="t" style="left:107.30px;top:81px;font-size:12px;line-height:12px;color:#222;transform:scaleX(1.0107);">Calibri</span>
<svg class="a" style="left:217px;top:85px;" width="6" height="3" viewBox="0 0 6 3"><path d="M0 0 H6 L3 3 Z" fill="#555"/></svg>
<div class="a" style="left:229px;top:75px;width:43px;height:23px;background:#fff;border:1px solid #ababab;box-sizing:border-box;"></div>
<span class="t" style="left:233.00px;top:81px;font-size:12px;line-height:12px;color:#222;transform:scaleX(0.8214);">11</span>
<svg class="a" style="left:261px;top:85px;" width="6" height="3" viewBox="0 0 6 3"><path d="M0 0 H6 L3 3 Z" fill="#555"/></svg>
<span class="t" style="left:280.40px;top:80px;font-size:14px;line-height:14px;color:#555;transform:scaleX(1.1000);-webkit-text-stroke:0.5px #555;">A</span>
<svg class="a" style="left:288px;top:79px;" width="6" height="3" viewBox="0 0 6 3"><path d="M0 3 L3 0 L6 3 Z" fill="#3d7fc4"/></svg>
<span class="t" style="left:305.00px;top:83px;font-size:11px;line-height:11px;color:#555;transform:scaleX(1.0625);-webkit-text-stroke:0.5px #555;">A</span>
<svg class="a" style="left:312px;top:79px;" width="6" height="3" viewBox="0 0 6 3"><path d="M0 0 L3 3 L6 0 Z" fill="#3d7fc4"/></svg>
<span class="t" style="left:110.80px;top:111px;font-size:12px;line-height:12px;color:#444;font-weight:bold;transform:scaleX(1.0250);">N</span>
<span class="t" style="left:133.30px;top:111px;font-size:12px;line-height:12px;color:#555;font-weight:bold;transform:scaleX(0.9200);font-style:italic;">K</span>
<span class="t" style="left:159.00px;top:111px;font-size:12px;line-height:12px;color:#444;font-weight:bold;">S</span>
<div class="a" style="left:159px;top:122px;width:8px;height:1px;background:#444;"></div>
<svg class="a" style="left:177px;top:115px;" width="6" height="4" viewBox="0 0 6 4"><path d="M0.5 0.5 L3 3 L5.5 0.5" fill="none" stroke="#444" stroke-width="1.2"/></svg>
<div class="a" style="left:193px;top:107px;width:1px;height:20px;background:#d4d4d4;"></div>
<svg class="a" style="left:201px;top:109px;" width="15" height="14" viewBox="0 0 15 14"><path d="M0.5 0.5 H14.5 V12.5 H0.5 Z M7.5 0.5 V12.5 M0.5 6.5 H14.5" fill="none" stroke="#a0a0a0" stroke-width="1" stroke-dasharray="1 1"/><path d="M0 13.5 H15" stroke="#555" stroke-width="1.2"/></svg>
<svg class="a" style="left:224px;top:115px;" width="6" height="4" viewBox="0 0 6 4"><path d="M0.5 0.5 L3 3 L5.5 0.5" fill="none" stroke="#444" stroke-width="1.2"/></svg>
<div class="a" style="left:240px;top:107px;width:1px;height:20px;background:#d4d4d4;"></div>
<svg class="a" style="left:247px;top:108px;" width="17" height="17" viewBox="0 0 17 17"><path d="M2 7 L7 2 L12 7 L7 12 Z" fill="#fff" stroke="#555" stroke-width="1.1"/><path d="M5 1 V5" stroke="#555" stroke-width="1"/><path d="M12.5 6 Q15 8 13.5 10.5" fill="none" stroke="#3d7fc4" stroke-width="1.8"/><rect x="0" y="13" width="16.5" height="4" fill="#ffff00"/></svg>
<svg class="a" style="left:270px;top:115px;" width="6" height="4" viewBox="0 0 6 4"><path d="M0.5 0.5 L3 3 L5.5 0.5" fill="none" stroke="#444" stroke-width="1.2"/></svg>
<span class="t" style="left:290.00px;top:109px;font-size:14px;line-height:14px;color:#555;transform:scaleX(0.9500);-webkit-text-stroke:0.5px #555;">A</span>
<div class="a" style="left:286px;top:121px;width:16px;height:4px;background:#ff0000;"></div>
<svg class="a" style="left:309px;top:115px;" width="6" height="4" viewBox="0 0 6 4"><path d="M0.5 0.5 L3 3 L5.5 0.5" fill="none" stroke="#444" stroke-width="1.2"/></svg>
<div class="a" style="left:360px;top:75px;width:22px;height:23px;background:#a0d4b4;border:1px solid #3f9a5f;box-sizing:border-box;"></div>
<div class="a" style="left:360px;top:106px;width:22px;height:23px;background:#a0d4b4;border:1px solid #3f9a5f;box-sizing:border-box;"></div>
<svg class="a" style="left:340px;top:78px;" width="16" height="16" viewBox="0 0 16 16"><rect x="0" y="0" width="14" height="1" fill="#666"/><rect x="0" y="3" width="14" height="1" fill="#666"/><rect x="0" y="6" width="14" height="1" fill="#666"/></svg>
<svg class="a" style="left:364px;top:82px;" width="16" height="16" viewBox="0 0 16 16"><rect x="0" y="0" width="14" height="1" fill="#666"/><rect x="0" y="3" width="14" height="1" fill="#666"/><rect x="0" y="6" width="14" height="1" fill="#666"/></svg>
<svg class="a" style="left:388px;top:87px;" width="16" height="16" viewBox="0 0 16 16"><rect x="0" y="0" width="14" height="1" fill="#666"/><rect x="0" y="3" width="14" height="1" fill="#666"/><rect x="0" y="6" width="14" height="1" fill="#666"/></svg>
<svg class="a" style="left:340px;top:112px;" width="16" height="16" viewBox="0 0 16 16"><rect x="0" y="0" width="14" height="1" fill="#666"/><rect x="0" y="3" width="10" height="1" fill="#666"/><rect x="0" y="6" width="14" height="1" fill="#666"/><rect x="0" y="9" width="10" height="1" fill="#666"/></svg>
<svg class="a" style="left:364px;top:112px;" width="16" height="16" viewBox="0 0 16 16"><rect x="0" y="0" width="14" height="1" fill="#666"/><rect x="2" y="3" width="10" height="1" fill="#666"/><rect x="0" y="6" width="14" height="1" fill="#666"/><rect x="2" y="9" width="10" height="1" fill="#666"/></svg>
<svg class="a" style="left:388px;top:112px;" width="16" height="16" viewBox="0 0 16 16"><rect x="0" y="0" width="14" height="1" fill="#666"/><rect x="4" y="3" width="10" height="1" fill="#666"/><rect x="0" y="6" width="14" height="1" fill="#666"/><rect x="4" y="9" width="10" height="1" fill="#666"/></svg>
<svg class="a" style="left:412px;top:78px;" width="17" height="15" viewBox="0 0 17 15"><text x="3.8" y="12.2" transform="rotate(-45 3.8 12.2)" font-family="Liberation Sans" font-size="11.5" fill="#444">ab</text><path d="M6.5 14.5 L15.5 5.5" fill="none" stroke="#555" stroke-width="1.2"/><path d="M16.2 4.8 L11.8 5.9 L15.1 9.2 Z" fill="#555"/></svg>
<svg class="a" style="left:433px;top:85px;" width="6" height="4" viewBox="0 0 6 4"><path d="M0.5 0.5 L3 3 L5.5 0.5" fill="none" stroke="#444" stroke-width="1.2"/></svg>
<svg class="a" style="left:412px;top:110px;" width="17" height="14" viewBox="0 0 17 14"><rect x="0" y="0" width="16" height="1" fill="#666"/><rect x="7" y="4" width="9" height="1" fill="#666"/><rect x="7" y="8" width="9" height="1" fill="#666"/><rect x="0" y="12" width="16" height="1" fill="#666"/><path d="M0.5 6.5 H6 M3.5 3.5 L0.5 6.5 L3.5 9.5" fill="none" stroke="#3d7fc4" stroke-width="1.6"/></svg>
<svg class="a" style="left:436px;top:110px;" width="17" height="14" viewBox="0 0 17 14"><rect x="0" y="0" width="16" height="1" fill="#666"/><rect x="7" y="4" width="9" height="1" fill="#666"/><rect x="7" y="8" width="9" height="1" fill="#666"/><rect x="0" y="12" width="16" height="1" fill="#666"/><path d="M0 6.5 H5.5 M2.5 3.5 L5.5 6.5 L2.5 9.5" fill="none" stroke="#3d7fc4" stroke-width="1.6"/></svg>
<div class="a" style="left:459px;top:74px;width:1px;height:55px;background:#d4d4d4;"></div>
<svg class="a" style="left:468px;top:79px;" width="14" height="15" viewBox="0 0 14 15"><text x="-0.5" y="7.5" font-family="Liberation Sans" font-size="10" fill="#555" textLength="13" lengthAdjust="spacingAndGlyphs">ab</text><text x="0" y="14.5" font-family="Liberation Sans" font-size="10" fill="#555">c</text><path d="M12.5 9 V12 H7.5 M9 10.5 L7.5 12 L9 13.5" fill="none" stroke="#3d7fc4" stroke-width="1.1"/></svg>
<svg class="a" style="left:467px;top:109px;" width="15" height="15" viewBox="0 0 15 15"><rect x="0.5" y="0.5" width="14" height="14" fill="#fff" stroke="#666"/><path d="M0.5 4.5 H14.5 M0.5 10.5 H14.5 M7.5 0.5 V4.5 M7.5 10.5 V14.5" stroke="#666"/><path d="M2.5 7.5 H12.5 M4 6 L2.5 7.5 L4 9 M11 6 L12.5 7.5 L11 9" fill="none" stroke="#3d7fc4"/></svg>
<svg class="a" style="left:489px;top:116px;" width="6" height="4" viewBox="0 0 6 4"><path d="M0.5 0.5 L3 3 L5.5 0.5" fill="none" stroke="#444" stroke-width="1.2"/></svg>
<div class="a" style="left:518px;top:75px;width:140px;height:23px;background:#fff;border:1px solid #ababab;box-sizing:border-box;"></div>
<span class="t" style="left:521.30px;top:81px;font-size:12px;line-height:12px;color:#222;transform:scaleX(0.9351);">General</span>
<svg class="a" style="left:648px;top:85px;" width="6" height="3" viewBox="0 0 6 3"><path d="M0 0 H6 L3 3 Z" fill="#777"/></svg>
<span class="t" style="left:525.80px;top:110px;font-size:14px;line-height:14px;color:#555;transform:scaleX(0.9500);">$</span>
<svg class="a" style="left:544px;top:116px;" width="6" height="4" viewBox="0 0 6 4"><path d="M0.5 0.5 L3 3 L5.5 0.5" fill="none" stroke="#444" stroke-width="1.2"/></svg>
<span class="t" style="left:562.30px;top:112px;font-size:13px;line-height:13px;color:#555;transform:scaleX(1.0250);">%</span>
<span class="t" style="left:585.00px;top:112px;font-size:9px;line-height:9px;color:#444;transform:scaleX(0.9327);">000</span>
<div class="a" style="left:607px;top:107px;width:1px;height:21px;background:#d4d4d4;"></div>
<svg class="a" style="left:614px;top:110px;" width="16" height="14" viewBox="0 0 16 14"><path d="M1 3.5 H7 M3.5 1 L1 3.5 L3.5 6" fill="none" stroke="#3d7fc4" stroke-width="1.3"/><text x="8" y="7" font-family="Liberation Sans" font-size="7.5" fill="#555">0</text><text x="2" y="13.5" font-family="Liberation Sans" font-size="7.5" fill="#555">,00</text></svg>
<svg class="a" style="left:639px;top:110px;" width="16" height="14" viewBox="0 0 16 14"><text x="2" y="6.5" font-family="Liberation Sans" font-size="7.5" fill="#555">,00</text><path d="M0.5 10.5 H6.5 M4 8 L6.5 10.5 L4 13" fill="none" stroke="#3d7fc4" stroke-width="1.3"/><text x="7.5" y="13.5" font-family="Liberation Sans" font-size="7.5" fill="#555">,0</text></svg>
<svg class="a" style="left:699px;top:72px;" width="31" height="30" viewBox="0 0 31 30"><g fill="#fff" stroke="#8a8a8a" stroke-width="1"><path d="M0.5 0.5 H26.5 V24.5 H0.5 Z"/><path d="M7.5 0.5 V24.5 M20.5 0.5 V24.5 M0.5 6.5 H26.5 M0.5 12.5 H26.5 M0.5 18.5 H26.5"/></g><rect x="8" y="1" width="6" height="5" fill="#e05a2b"/><rect x="8" y="7" width="12" height="5" fill="#3d7fc4"/><rect x="8" y="13" width="9" height="5" fill="#e05a2b"/><rect x="8" y="19" width="4" height="5" fill="#3d7fc4"/><rect x="14.5" y="15.5" width="16" height="14" fill="#fff" stroke="#6d6d6d"/><text x="17.5" y="27" font-family="Liberation Sans" font-size="12" fill="#444">≠</text></svg>
<span class="t" style="left:690.30px;top:107px;font-size:12px;line-height:12px;color:#262626;transform:scaleX(0.9799);">Formato</span>
<span class="t" style="left:676.40px;top:123px;font-size:12px;line-height:12px;color:#262626;transform:scaleX(1.0611);">condicional</span>
<svg class="a" style="left:742px;top:128px;" width="6" height="4" viewBox="0 0 6 4"><path d="M0.5 0.5 L3 3 L5.5 0.5" fill="none" stroke="#444" stroke-width="1.2"/></svg>
<svg class="a" style="left:777px;top:73px;" width="30" height="30" viewBox="0 0 30 30"><g stroke="#8a8a8a" stroke-width="1"><path d="M0.5 0.5 H24.5 V22.5 H0.5 Z" fill="#fff"/><rect x="6.5" y="6.5" width="18" height="16" fill="#bcd2ec"/><path d="M6.5 0.5 V22.5 M12.5 0.5 V22.5 M18.5 0.5 V22.5 M0.5 6.5 H24.5 M0.5 12.5 H24.5 M0.5 17.5 H24.5" fill="none"/></g><path d="M17 20 L27 9 L29.5 11.5 L19.5 22" fill="#6d6d6d"/><path d="M8 29 C10 22 14 18 19 19 C20 23 16 28 8 29 Z" fill="#3d7fc4"/></svg>
<span class="t" style="left:758.50px;top:107px;font-size:12px;line-height:12px;color:#262626;transform:scaleX(0.9909);">Dar formato</span>
<span class="t" style="left:754.60px;top:123px;font-size:12px;line-height:12px;color:#262626;transform:scaleX(0.9657);">como tabla</span>
<svg class="a" style="left:818px;top:128px;" width="6" height="4" viewBox="0 0 6 4"><path d="M0.5 0.5 L3 3 L5.5 0.5" fill="none" stroke="#444" stroke-width="1.2"/></svg>
<svg class="a" style="left:842px;top:72px;" width="30" height="30" viewBox="0 0 30 30"><g stroke="#8a8a8a" stroke-width="1"><path d="M0.5 0.5 H24.5 V22.5 H0.5 Z" fill="#fff"/><path d="M6.5 0.5 V22.5 M18.5 0.5 V22.5 M0.5 6.5 H24.5 M0.5 17.5 H24.5" fill="none"/></g><rect x="7" y="7" width="11" height="10" fill="#bcd2ec"/><path d="M17 20 L27 9 L29.5 11.5 L19.5 22" fill="#6d6d6d"/><path d="M8 29 C10 22 14 18 19 19 C20 23 16 28 8 29 Z" fill="#3d7fc4"/></svg>
<span class="t" style="left:830.90px;top:107px;font-size:12px;line-height:12px;color:#262626;transform:scaleX(0.9150);">Estilos de</span>
<span class="t" style="left:835.40px;top:123px;font-size:12px;line-height:12px;color:#262626;transform:scaleX(0.9651);">celda</span>
<svg class="a" style="left:866px;top:128px;" width="6" height="4" viewBox="0 0 6 4"><path d="M0.5 0.5 L3 3 L5.5 0.5" fill="none" stroke="#444" stroke-width="1.2"/></svg>
<svg class="a" style="left:901px;top:70px;" width="16" height="16" viewBox="0 0 16 16"><g fill="#fff" stroke="#777"><rect x="0.5" y="0.5" width="7" height="4"/><rect x="0.5" y="10.5" width="7" height="5"/><rect x="0.5" y="4.5" width="7" height="6"/></g><rect x="7.5" y="5.5" width="8" height="4" fill="#bcd2ec" stroke="#777"/><path d="M1 7.5 H6 M3 5.5 L1 7.5 L3 9.5" fill="none" stroke="#3d7fc4" stroke-width="1.3"/></svg>
<span class="t" style="left:919.54px;top:73px;font-size:12px;line-height:12px;color:#262626;transform:scaleX(0.9626);">Insertar</span>
<svg class="a" style="left:970px;top:77px;" width="6" height="4" viewBox="0 0 6 4"><path d="M0.5 0.5 L3 3 L5.5 0.5" fill="none" stroke="#444" stroke-width="1.2"/></svg>
<svg class="a" style="left:901px;top:93px;" width="17" height="16" viewBox="0 0 17 16"><g fill="#fff" stroke="#777"><rect x="0.5" y="0.5" width="7" height="4"/><rect x="0.5" y="10.5" width="7" height="5"/><rect x="0.5" y="4.5" width="7" height="6"/></g><rect x="4.5" y="5.5" width="4" height="4" fill="#bcd2ec" stroke="#777"/><path d="M10 4 L16 10 M16 4 L10 10" stroke="#e05a2b" stroke-width="1.5"/></svg>
<span class="t" style="left:920.50px;top:96px;font-size:12px;line-height:12px;color:#262626;transform:scaleX(0.9782);">Eliminar</span>
<svg class="a" style="left:974px;top:100px;" width="6" height="4" viewBox="0 0 6 4"><path d="M0.5 0.5 L3 3 L5.5 0.5" fill="none" stroke="#444" stroke-width="1.2"/></svg>
<svg class="a" style="left:901px;top:116px;" width="16" height="16" viewBox="0 0 16 16"><path d="M0.5 1.5 H14.5 M2.5 0 V3 M12.5 0 V3" stroke="#3d7fc4" stroke-width="1"/><g fill="#fff" stroke="#777"><rect x="0.5" y="4.5" width="14" height="10"/></g><path d="M5.5 4.5 V14.5 M10.5 4.5 V14.5 M0.5 7.5 H14.5 M0.5 11.5 H14.5" stroke="#999"/><rect x="5" y="7" width="5" height="4" fill="#3d7fc4"/></svg>
<span class="t" style="left:920.50px;top:119px;font-size:12px;line-height:12px;color:#262626;transform:scaleX(0.9732);">Formato</span>
<svg class="a" style="left:969px;top:123px;" width="6" height="4" viewBox="0 0 6 4"><path d="M0.5 0.5 L3 3 L5.5 0.5" fill="none" stroke="#444" stroke-width="1.2"/></svg>
<svg class="a" style="left:1005px;top:70px;" width="15" height="15" viewBox="0 0 15 15"><path d="M14 1 H1 L7 7.5 L1 14 H14" fill="none" stroke="#444" stroke-width="2"/></svg>
<svg class="a" style="left:1028px;top:77px;" width="6" height="4" viewBox="0 0 6 4"><path d="M0.5 0.5 L3 3 L5.5 0.5" fill="none" stroke="#444" stroke-width="1.2"/></svg>
<svg class="a" style="left:1006px;top:93px;" width="14" height="16" viewBox="0 0 14 16"><rect x="0.5" y="0.5" width="13" height="15" fill="#fff" stroke="#666"/><rect x="0" y="0" width="14" height="2.5" fill="#666"/><path d="M7 5 V12.5 M4 9.5 L7 12.5 L10 9.5" fill="none" stroke="#3d7fc4" stroke-width="1.6"/></svg>
<svg class="a" style="left:1028px;top:100px;" width="6" height="4" viewBox="0 0 6 4"><path d="M0.5 0.5 L3 3 L5.5 0.5" fill="none" stroke="#444" stroke-width="1.2"/></svg>
<svg class="a" style="left:1006px;top:117px;" width="13" height="13" viewBox="0 0 13 13"><path d="M0 8.5 L8 0.5 L12.5 5 L4.5 13 Z" fill="#e8788a"/><path d="M0 8.5 L2.5 6 L7 10.5 L4.5 13 Z" fill="#f2b2bd"/></svg>
<svg class="a" style="left:1028px;top:123px;" width="6" height="4" viewBox="0 0 6 4"><path d="M0.5 0.5 L3 3 L5.5 0.5" fill="none" stroke="#444" stroke-width="1.2"/></svg>
<svg class="a" style="left:1053px;top:73px;" width="30" height="27" viewBox="0 0 30 27"><text x="0" y="11" font-family="Liberation Sans" font-weight="bold" font-size="14.5" fill="#3d7fc4">A</text><text x="0.5" y="25.5" font-family="Liberation Sans" font-weight="bold" font-size="14" fill="#9b5cc8">Z</text><path d="M12 7 H29 L22.5 14 V21 H18.5 V14 Z" fill="#7a7a7a"/><path d="M19.8 14 V20" stroke="#fff" stroke-width="1"/></svg>
<span class="t" style="left:1042.70px;top:107px;font-size:12px;line-height:12px;color:#262626;transform:scaleX(0.9615);">Ordenar y</span>
<span class="t" style="left:1049.40px;top:123px;font-size:12px;line-height:12px;color:#262626;transform:scaleX(1.0686);">filtrar</span>
<svg class="a" style="left:1081px;top:128px;" width="6" height="4" viewBox="0 0 6 4"><path d="M0.5 0.5 L3 3 L5.5 0.5" fill="none" stroke="#444" stroke-width="1.2"/></svg>
<svg class="a" style="left:1120px;top:72px;" width="28" height="28" viewBox="0 0 28 28"><circle cx="17.5" cy="9.5" r="7.8" fill="none" stroke="#3d7fc4" stroke-width="2.4"/><path d="M12 15.5 L2 25.5" stroke="#3d7fc4" stroke-width="3.4" stroke-linecap="round"/></svg>
<span class="t" style="left:1112.30px;top:107px;font-size:12px;line-height:12px;color:#262626;transform:scaleX(0.9318);">Buscar y</span>
<span class="t" style="left:1099.00px;top:123px;font-size:12px;line-height:12px;color:#262626;transform:scaleX(1.0049);">seleccionar</span>
<svg class="a" style="left:1162px;top:128px;" width="6" height="4" viewBox="0 0 6 4"><path d="M0.5 0.5 L3 3 L5.5 0.5" fill="none" stroke="#444" stroke-width="1.2"/></svg>
<svg class="a" style="left:1225px;top:80px;" width="10" height="10" viewBox="0 0 10 10"><circle cx="5" cy="5" r="5" fill="#ff9a00"/></svg>
<span class="t" style="left:1190.60px;top:107px;font-size:12px;line-height:12px;color:#262626;transform:scaleX(1.0087);">Complementos</span>
<div class="a" style="left:0px;top:157px;width:1366px;height:30px;background:#fcf4bc;"></div>
<div class="a" style="left:0px;top:157px;width:1366px;height:1px;background:#bf9000;"></div>
<div class="a" style="left:0px;top:186px;width:1366px;height:1px;background:#bf9000;"></div>
<svg class="a" style="left:9px;top:161px;" width="22" height="22" viewBox="0 0 22 22"><circle cx="11" cy="11" r="11" fill="#4d7fbb"/><rect x="9.6" y="9" width="2.8" height="9" fill="#fff"/><circle cx="11" cy="6" r="1.6" fill="#fff"/></svg>
<span class="t" style="left:40.40px;top:167px;font-size:12px;line-height:12px;color:#262626;transform:scaleX(0.9315);">ACTUALIZACIONES DISPONIBLES</span>
<span class="t" style="left:233.70px;top:167px;font-size:12px;line-height:12px;color:#262626;transform:scaleX(0.9691);text-decoration:underline;">Las actualizaciones de Office están listas para la instalación, pero antes tenemos que cerrar algunas aplicaciones.</span>
<div class="a" style="left:835px;top:161px;width:119px;height:22px;background:#fff;border:1px solid #a6a6a6;box-sizing:border-box;"></div>
<span class="t" style="left:851.30px;top:167px;font-size:12px;line-height:12px;color:#262626;transform:scaleX(0.9674);">Actualizar ahora</span>
<svg class="a" style="left:1345px;top:167px;" width="10" height="10" viewBox="0 0 10 10"><path d="M0.5 0.5 L9.5 9.5 M9.5 0.5 L0.5 9.5" stroke="#444" stroke-width="1.2"/></svg>
<div class="a" style="left:5px;top:197px;width:102px;height:26px;background:#fff;border:1px solid #c6c6c6;box-sizing:border-box;"></div>
<span class="t" style="left:12.00px;top:205px;font-size:12px;line-height:12px;color:#222;transform:scaleX(1.0295);">K11</span>
<svg class="a" style="left:93px;top:208px;" width="7" height="4" viewBox="0 0 7 4"><path d="M0 0 H7 L3.5 4 Z" fill="#555"/></svg>
<div class="a" style="left:121px;top:205px;width:2px;height:2px;background:#999;"></div>
<div class="a" style="left:121px;top:209px;width:2px;height:2px;background:#999;"></div>
<div class="a" style="left:121px;top:213px;width:2px;height:2px;background:#999;"></div>
<div class="a" style="left:137px;top:197px;width:110px;height:26px;background:#fff;border:1px solid #c6c6c6;box-sizing:border-box;"></div>
<svg class="a" style="left:150px;top:204px;" width="12" height="12" viewBox="0 0 12 12"><path d="M1 1 L11 11 M11 1 L1 11" stroke="#a8a8a8" stroke-width="1.3"/></svg>
<svg class="a" style="left:185px;top:204px;" width="14" height="12" viewBox="0 0 14 12"><path d="M1 6 L5 10.5 L13 1.5" fill="none" stroke="#a8a8a8" stroke-width="1.8"/></svg>
<svg class="a" style="left:222px;top:204px;" width="13" height="12" viewBox="0 0 13 12"><text x="0" y="10" font-family="Liberation Serif" font-style="italic" font-weight="bold" font-size="13" fill="#555">f</text><text x="5" y="10" font-family="Liberation Serif" font-style="italic" font-size="10.5" fill="#555">x</text></svg>
<div class="a" style="left:250px;top:197px;width:1111px;height:66px;background:#fdfdfd;border:1px solid #c6c6c6;box-sizing:border-box;"></div>
<span class="t" style="left:261.50px;top:205px;font-size:12px;line-height:12px;color:#222;transform:scaleX(1.0148);">=OCTUBRE!AG12</span>
<svg class="a" style="left:1349px;top:206px;" width="8" height="5" viewBox="0 0 8 5"><path d="M0.5 4.5 L4 1 L7.5 4.5" fill="none" stroke="#666" stroke-width="1.6"/></svg>
<div class="a" style="left:0px;top:670px;width:1366px;height:29px;background:#f3f3f3;"></div>
<div class="a" style="left:0px;top:670px;width:1345px;height:1px;background:#c6c6c6;"></div>
<div class="a" style="left:1106px;top:671px;width:28px;height:28px;background:#fff;"></div>
<svg class="a" style="left:27px;top:679px;" width="4" height="8" viewBox="0 0 4 8"><path d="M4 0 V8 L0 4 Z" fill="#c0c0c0"/></svg>
<svg class="a" style="left:56px;top:679px;" width="4" height="8" viewBox="0 0 4 8"><path d="M0 0 V8 L4 4 Z" fill="#217346"/></svg>
<div class="a" style="left:100px;top:670px;width:81px;height:25px;background:#fff;border:1px solid #c6c6c6;box-sizing:border-box;border-top:none;"></div>
<div class="a" style="left:101px;top:693px;width:80px;height:2px;background:#217346;"></div>
<span class="t" style="left:112.20px;top:676px;font-size:14px;line-height:14px;color:#217346;font-weight:bold;transform:scaleX(0.8791);">TOTALES</span>
<span class="t" style="left:192.20px;top:678px;font-size:12px;line-height:12px;color:#333;transform:scaleX(0.9802);">ENERO</span>
<span class="t" style="left:259.20px;top:678px;font-size:12px;line-height:12px;color:#333;transform:scaleX(0.9016);">FEBRERO</span>
<span class="t" style="left:338.30px;top:678px;font-size:12px;line-height:12px;color:#333;transform:scaleX(1.0210);">MARZO</span>
<span class="t" style="left:410.00px;top:678px;font-size:12px;line-height:12px;color:#333;transform:scaleX(0.9198);">ABRIL</span>
<span class="t" style="left:468.60px;top:678px;font-size:12px;line-height:12px;color:#333;transform:scaleX(1.0817);">MAYO</span>
<span class="t" style="left:532.90px;top:678px;font-size:12px;line-height:12px;color:#333;transform:scaleX(1.0038);">JUNIO</span>
<span class="t" style="left:595.00px;top:678px;font-size:12px;line-height:12px;color:#333;transform:scaleX(0.9741);">JULIO</span>
<span class="t" style="left:655.20px;top:678px;font-size:12px;line-height:12px;color:#333;transform:scaleX(0.9963);">AGOSTO</span>
<span class="t" style="left:733.20px;top:678px;font-size:12px;line-height:12px;color:#333;transform:scaleX(0.9270);">SEPTIEMBRE</span>
<span class="t" style="left:832.30px;top:678px;font-size:12px;line-height:12px;color:#333;transform:scaleX(0.9426);">OCTUBRE</span>
<span class="t" style="left:914.00px;top:678px;font-size:12px;line-height:12px;color:#333;transform:scaleX(0.9888);">NOVIEMBRE</span>
<div class="a" style="left:246px;top:676px;width:1px;height:17px;background:#c6c6c6;"></div>
<div class="a" style="left:325px;top:676px;width:1px;height:17px;background:#c6c6c6;"></div>
<div class="a" style="left:396px;top:676px;width:1px;height:17px;background:#c6c6c6;"></div>
<div class="a" style="left:456px;top:676px;width:1px;height:17px;background:#c6c6c6;"></div>
<div class="a" style="left:519px;top:676px;width:1px;height:17px;background:#c6c6c6;"></div>
<div class="a" style="left:583px;top:676px;width:1px;height:17px;background:#c6c6c6;"></div>
<div class="a" style="left:642px;top:676px;width:1px;height:17px;background:#c6c6c6;"></div>
<div class="a" style="left:720px;top:676px;width:1px;height:17px;background:#c6c6c6;"></div>
<div class="a" style="left:819px;top:676px;width:1px;height:17px;background:#c6c6c6;"></div>
<div class="a" style="left:902px;top:676px;width:1px;height:17px;background:#c6c6c6;"></div>
<div class="a" style="left:999px;top:676px;width:1px;height:17px;background:#c6c6c6;"></div>
<span class="t" style="left:1014.00px;top:678px;font-size:12px;line-height:12px;color:#333;transform:scaleX(0.8899);">DICIEN</span>
<div class="a" style="left:1050px;top:672px;width:8px;height:22px;background:#f3f3f3;"></div>
<div class="a" style="left:1059px;top:685px;width:2px;height:2px;background:#217346;"></div>
<div class="a" style="left:1063px;top:685px;width:2px;height:2px;background:#217346;"></div>
<div class="a" style="left:1067px;top:685px;width:2px;height:2px;background:#217346;"></div>
<svg class="a" style="left:1082px;top:675px;" width="18" height="18" viewBox="0 0 18 18"><circle cx="9" cy="9" r="8" fill="none" stroke="#777" stroke-width="1.1"/><path d="M9 4.5 V13.5 M4.5 9 H13.5" stroke="#666" stroke-width="1.8"/></svg>
<div class="a" style="left:1119px;top:679px;width:2px;height:2px;background:#aaa;"></div>
<div class="a" style="left:1119px;top:683px;width:2px;height:2px;background:#aaa;"></div>
<div class="a" style="left:1119px;top:687px;width:2px;height:2px;background:#aaa;"></div>
<div class="a" style="left:1136px;top:677px;width:209px;height:15px;background:#fff;border:1px solid #a6a6a6;box-sizing:border-box;"></div>
<div class="a" style="left:1150px;top:677px;width:2px;height:15px;background:#a6a6a6;"></div>
<svg class="a" style="left:1141px;top:680px;" width="5" height="9" viewBox="0 0 5 9"><path d="M5 0 V9 L0 4.5 Z" fill="#222"/></svg>
<div class="a" style="left:1316px;top:677px;width:15px;height:15px;background:#f3f3f3;"></div>
<div class="a" style="left:1316px;top:677px;width:1px;height:1px;background:#a6a6a6;"></div>
<div class="a" style="left:1330px;top:677px;width:15px;height:15px;background:#fff;border:1px solid #a6a6a6;box-sizing:border-box;"></div>
<svg class="a" style="left:1336px;top:680px;" width="5" height="9" viewBox="0 0 5 9"><path d="M0 0 V9 L5 4.5 Z" fill="#222"/></svg>
<div class="a" style="left:0px;top:699px;width:1366px;height:18px;background:#217346;"></div>
<span class="t" style="left:11.40px;top:703px;font-size:12px;line-height:12px;color:#fff;transform:scaleX(0.9153);">Listo</span>
<svg class="a" style="left:54px;top:702px;" width="17" height="15" viewBox="0 0 17 15"><path d="M7 1 A6 6 0 1 0 12.5 9" fill="none" stroke="#fff" stroke-width="1.2" stroke-dasharray="2 1.2"/><path d="M8.5 0 V6 M6 3 H11" stroke="#fff" stroke-width="1.2"/><path d="M8 8 L15 15 M15 8 L8 15" stroke="#fff" stroke-width="1.6"/></svg>
<span class="t" style="left:73.80px;top:703px;font-size:12px;line-height:12px;color:#fff;font-weight:bold;transform:scaleX(0.8725);">Accesibilidad: es necesario investigar</span>
<div class="a" style="left:1066px;top:699px;width:40px;height:18px;background:#0a5c2c;"></div>
<svg class="a" style="left:1079px;top:702px;" width="13" height="13" viewBox="0 0 13 13"><path d="M0.5 0.5 H12.5 V12.5 H0.5 Z M4.5 0.5 V12.5 M8.5 0.5 V12.5 M0.5 4.5 H12.5 M0.5 8.5 H12.5" fill="none" stroke="#fff" stroke-width="1.1"/></svg>
<svg class="a" style="left:1119px;top:702px;" width="14" height="13" viewBox="0 0 14 13"><path d="M0.5 0.5 H13.5 V12.5 H0.5 Z" fill="none" stroke="#fff" stroke-width="1.1"/><path d="M3.5 3 H10.5 V10 H3.5 Z" fill="none" stroke="#fff" stroke-width="1"/><path d="M5 5 H9 M5 7 H9" stroke="#fff"/></svg>
<svg class="a" style="left:1159px;top:702px;" width="14" height="13" viewBox="0 0 14 13"><path d="M0.5 0.5 H13.5 V12.5 H0.5 Z" fill="none" stroke="#fff" stroke-width="1.1"/><rect x="3" y="0" width="3" height="6" fill="#fff"/><rect x="7" y="0" width="3" height="6" fill="#fff"/></svg>
<div class="a" style="left:1192px;top:708px;width:8px;height:1px;background:#fff;"></div>
<div class="a" style="left:1205px;top:709px;width:100px;height:1px;background:#fff;"></div>
<div class="a" style="left:1253px;top:704px;width:5px;height:11px;background:#fff;"></div>
<svg class="a" style="left:1310px;top:705px;" width="8" height="8" viewBox="0 0 8 8"><path d="M4 0 V8 M0 4 H8" stroke="#fff" stroke-width="1.2"/></svg>
<span class="t" style="left:1331.40px;top:703px;font-size:12px;line-height:12px;color:#fff;transform:scaleX(0.8865);">100%</span>
<svg class="a" style="left:1336px;top:341px;filter:drop-shadow(0 2px 2px rgba(0,0,0,0.25));" width="36" height="37" viewBox="0 0 36 37"><circle cx="18.7" cy="18.9" r="17.8" fill="#0f7fe6"/><path d="M6.699999999999909 12.800000000000011 L12.599999999999909 9.00000000000001 L18.499999999999908 12.800000000000011 L12.599999999999909 16.600000000000012 Z M18.800000000000047 12.800000000000011 L24.700000000000045 9.00000000000001 L30.600000000000044 12.800000000000011 L24.700000000000045 16.600000000000012 Z M6.699999999999909 21.600000000000023 L12.599999999999909 17.800000000000022 L18.499999999999908 21.600000000000023 L12.599999999999909 25.400000000000023 Z M18.800000000000047 21.600000000000023 L24.700000000000045 17.800000000000022 L30.600000000000044 21.600000000000023 L24.700000000000045 25.400000000000023 Z M13.00000000000009 27.19999999999999 L18.90000000000009 23.399999999999988 L24.80000000000009 27.19999999999999 L18.90000000000009 30.99999999999999 Z" fill="#fff"/></svg>
</body></html>
